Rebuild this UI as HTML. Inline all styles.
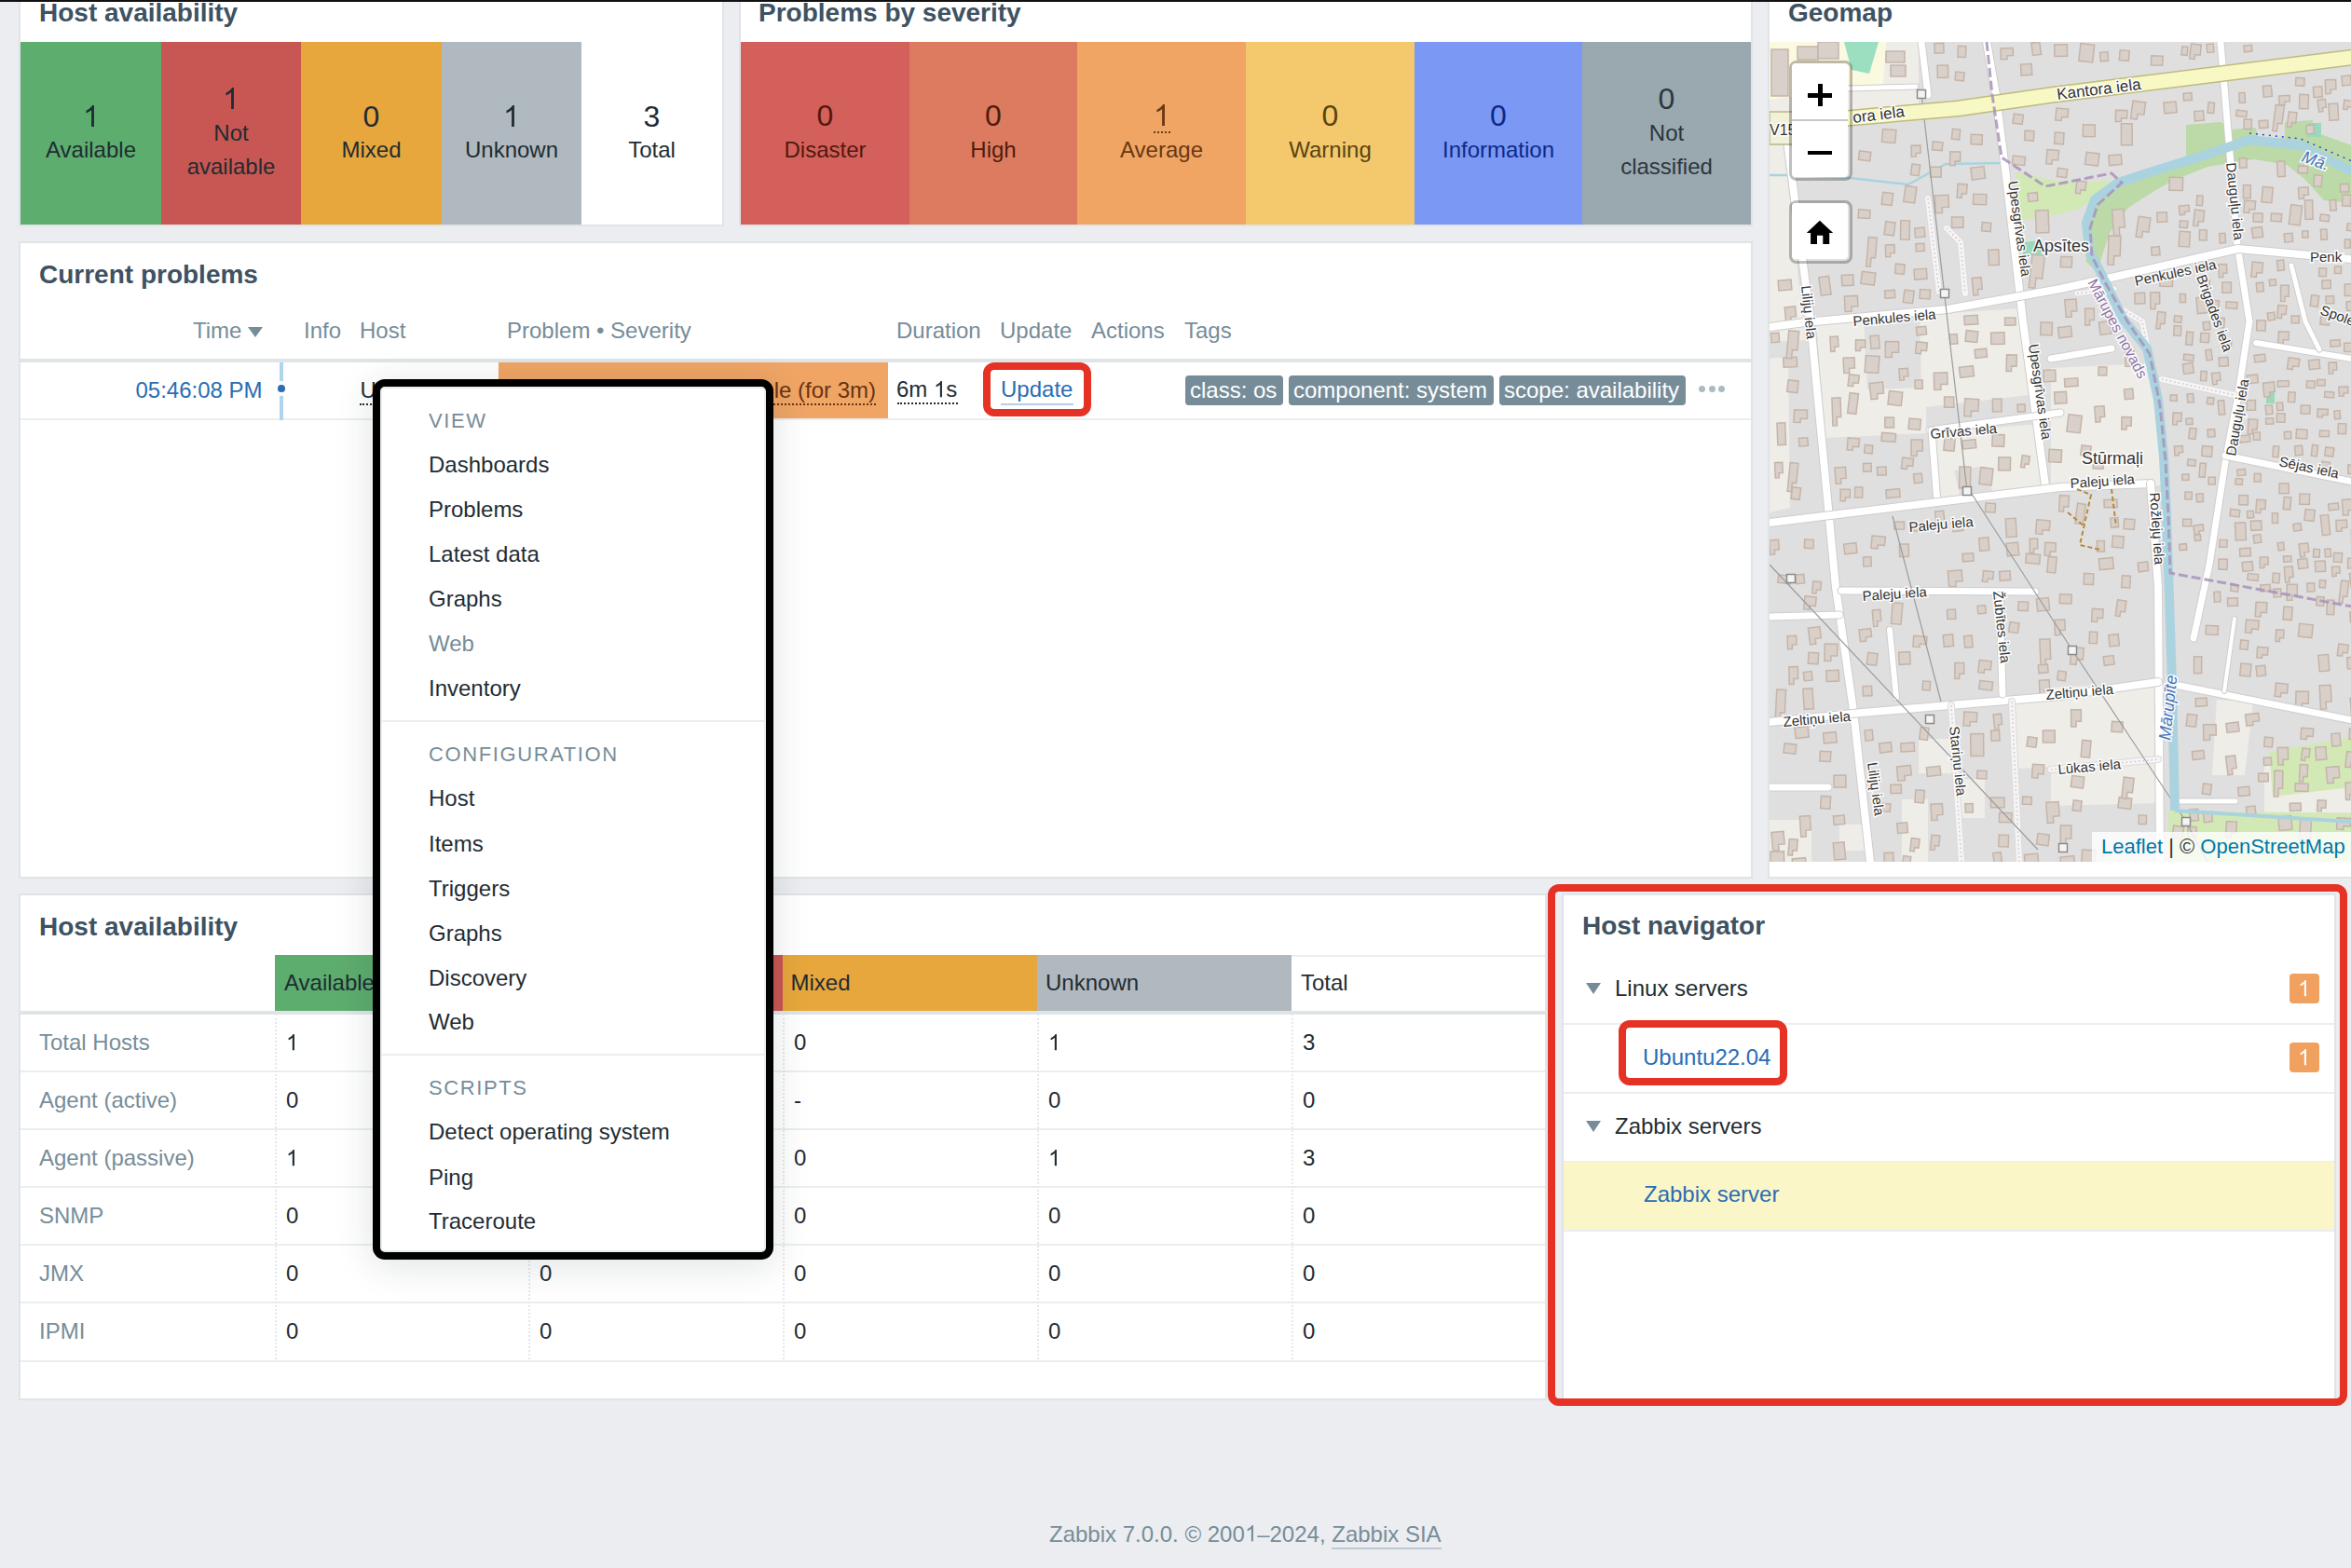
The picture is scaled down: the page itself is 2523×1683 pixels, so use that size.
<!DOCTYPE html>
<html><head><meta charset="utf-8">
<style>
html,body{margin:0;padding:0;}
body{width:2523px;height:1683px;overflow:hidden;background:#ebedf0;position:relative;font-family:"Liberation Sans",sans-serif;color:#1f2c33;}
.a{position:absolute;}
.t{position:absolute;white-space:pre;line-height:1;font-size:24px;}
.w{position:absolute;background:#fff;border:2px solid #dfe4e7;box-sizing:border-box;}
.ttl{position:absolute;white-space:pre;line-height:1;font-size:28px;font-weight:bold;color:#3e5262;}
.tile{position:absolute;top:45px;height:196px;}
.tile .n{position:absolute;left:0;right:0;text-align:center;font-size:32px;line-height:1;white-space:pre;}
.tile .l{position:absolute;left:0;right:0;text-align:center;font-size:24px;line-height:1;white-space:pre;}
.hd{color:#768d99;}
.lnk{color:#2a6db4;}
.mi{position:absolute;left:460px;font-size:24px;line-height:1;white-space:pre;color:#1f2c33;}
.mh{position:absolute;left:460px;font-size:22px;line-height:1;white-space:pre;color:#768d99;letter-spacing:1.6px;}
.msep{position:absolute;left:410px;width:412px;height:2px;background:#ebeef0;}
.tag{position:absolute;top:403px;height:32px;background:#768d99;color:#fff;border-radius:4px;font-size:24px;line-height:32px;white-space:pre;padding:0 5px;box-sizing:border-box;}
.red{position:absolute;border:8px solid #e53224;border-radius:12px;box-sizing:border-box;}
.cell{position:absolute;font-size:24px;line-height:1;white-space:pre;}
.hline{position:absolute;height:2px;background:#ebeef0;}
.vdot{position:absolute;width:0;border-left:2px dotted #e4e8eb;}
.badge{position:absolute;left:2457px;width:32px;height:32px;background:#f0a05f;border-radius:4px;color:#fff;font-size:24px;line-height:32px;text-align:center;}
.tri{position:absolute;width:0;height:0;border-left:8px solid transparent;border-right:8px solid transparent;border-top:12px solid #768d99;}
.one{display:inline-block;width:0.5562em;height:0.71875em;vertical-align:baseline;fill:currentColor;overflow:visible;}
</style></head><body>

<!-- top black line -->
<div class="a" style="left:0;top:0;width:2523px;height:2px;background:#111;z-index:50"></div>

<!-- ===== Widget: Host availability (tiles) ===== -->
<div class="w" style="left:20px;top:-40px;width:757px;height:283px;"></div>
<div class="ttl" style="left:42px;top:0.3px;">Host availability</div>
<div class="tile" style="left:22px;width:151px;background:#5dad6e;">
  <div class="n" style="top:64.0px;"><svg class="one" viewBox="0 0 1139 1472"><path transform="matrix(1 0 0 -1 0 1472)" d="M763,0 L583,0 L583,1147 Q518,1085 412,1023 Q306,961 222,930 L222,1104 Q373,1175 486,1276 Q599,1377 646,1472 L763,1472 Z"/></svg></div><div class="l" style="top:104.3px;">Available</div></div>
<div class="tile" style="left:173px;width:150px;background:#c85652;">
  <div class="n" style="top:45.3px;"><svg class="one" viewBox="0 0 1139 1472"><path transform="matrix(1 0 0 -1 0 1472)" d="M763,0 L583,0 L583,1147 Q518,1085 412,1023 Q306,961 222,930 L222,1104 Q373,1175 486,1276 Q599,1377 646,1472 L763,1472 Z"/></svg></div><div class="l" style="top:86.1px;">Not</div><div class="l" style="top:121.8px;">available</div></div>
<div class="tile" style="left:323px;width:151px;background:#e7a73c;">
  <div class="n" style="top:64.0px;">0</div><div class="l" style="top:104.3px;">Mixed</div></div>
<div class="tile" style="left:474px;width:150px;background:#b0b9bf;">
  <div class="n" style="top:64.0px;"><svg class="one" viewBox="0 0 1139 1472"><path transform="matrix(1 0 0 -1 0 1472)" d="M763,0 L583,0 L583,1147 Q518,1085 412,1023 Q306,961 222,930 L222,1104 Q373,1175 486,1276 Q599,1377 646,1472 L763,1472 Z"/></svg></div><div class="l" style="top:104.3px;">Unknown</div></div>
<div class="tile" style="left:624px;width:151px;background:#fff;">
  <div class="n" style="top:64.0px;">3</div><div class="l" style="top:104.3px;">Total</div></div>

<!-- ===== Widget: Problems by severity ===== -->
<div class="w" style="left:793px;top:-40px;width:1088px;height:283px;"></div>
<div class="ttl" style="left:814px;top:0.3px;">Problems by severity</div>
<div class="tile" style="left:795px;width:181px;background:#d4605c;color:#52190d;">
  <div class="n" style="top:62.7px;">0</div><div class="l" style="top:103.9px;">Disaster</div></div>
<div class="tile" style="left:976px;width:180px;background:#dc7b5f;color:#4e1d0c;">
  <div class="n" style="top:62.7px;">0</div><div class="l" style="top:103.9px;">High</div></div>
<div class="tile" style="left:1156px;width:181px;background:#f0a565;color:#693811;">
  <div class="n" style="top:62.7px;"><svg class="one" viewBox="0 0 1139 1472"><path transform="matrix(1 0 0 -1 0 1472)" d="M763,0 L583,0 L583,1147 Q518,1085 412,1023 Q306,961 222,930 L222,1104 Q373,1175 486,1276 Q599,1377 646,1472 L763,1472 Z"/></svg></div><div class="a" style="left:82px;top:96px;width:18px;border-top:2px dotted #693811;"></div><div class="l" style="top:103.9px;">Average</div></div>
<div class="tile" style="left:1337px;width:181px;background:#f4c86c;color:#5a4412;">
  <div class="n" style="top:62.7px;">0</div><div class="l" style="top:103.9px;">Warning</div></div>
<div class="tile" style="left:1518px;width:180px;background:#7b98f4;color:#0d2a88;">
  <div class="n" style="top:62.7px;">0</div><div class="l" style="top:103.9px;">Information</div></div>
<div class="tile" style="left:1698px;width:181px;background:#9aa8b0;color:#2c363c;">
  <div class="n" style="top:44.8px;">0</div><div class="l" style="top:86.1px;">Not</div><div class="l" style="top:121.8px;">classified</div></div>

<!-- ===== Widget: Geomap ===== -->
<div class="w" style="left:1897px;top:-40px;width:700px;height:983px;"></div>
<div class="ttl" style="left:1919px;top:0px;">Geomap</div>
<div id="map" class="a" style="left:1899px;top:45px;width:624px;height:880px;overflow:hidden;background:#e0dfdf;">
<!--MAP-->
<svg width="625" height="880" viewBox="0 0 625 880" style="position:absolute;left:0;top:0;">
<rect width="625" height="880" fill="#e0dfdf"/>
<polygon points="50.0,300.0 272.0,286.0 287.0,378.0 168.0,392.0 168.0,420.0 60.0,425.0" fill="#efede8"/>
<polygon points="178.0,419.0 290.0,410.0 296.0,476.0 180.0,492.0" fill="#efede8"/>
<polygon points="302.0,350.0 413.0,345.0 420.0,476.0 302.0,480.0" fill="#efede8"/>
<polygon points="160.0,748.0 198.0,748.0 198.0,785.0 160.0,785.0" fill="#efede8"/>
<polygon points="142.0,813.0 170.0,813.0 170.0,880.0 142.0,880.0" fill="#efede8"/>
<polygon points="205.0,791.0 231.0,791.0 231.0,833.0 205.0,833.0" fill="#efede8"/>
<polygon points="263.0,708.0 312.0,706.0 312.0,778.0 263.0,780.0" fill="#efede8"/>
<polygon points="0.0,835.0 45.0,835.0 45.0,880.0 0.0,880.0" fill="#efede8"/>
<polygon points="75.0,840.0 105.0,840.0 105.0,868.0 75.0,868.0" fill="#efede8"/>
<polygon points="302.0,693.0 415.0,688.0 417.0,817.0 302.0,820.0" fill="#efede8"/>
<polygon points="480.0,706.0 519.0,708.0 510.0,787.0 475.0,787.0" fill="#efede8"/>
<polygon points="531.0,772.0 625.0,760.0 625.0,827.0 531.0,827.0" fill="#efede8"/>
<polygon points="0.0,0.0 160.0,0.0 160.0,70.0 0.0,80.0" fill="#efede8"/>
<polygon points="0.0,340.0 20.0,338.0 22.0,500.0 0.0,505.0" fill="#efede8"/>
<polygon points="0.0,95.0 14.0,95.0 38.0,320.0 0.0,322.0" fill="#efede8"/>
<polygon points="101.0,296.0 161.0,292.0 163.0,371.0 105.0,373.0" fill="#e0dfdf"/>
<polygon points="198.0,460.0 232.0,455.0 240.0,486.0 205.0,490.0" fill="#e0dfdf"/>
<polygon points="0.0,0.0 125.0,0.0 122.0,45.0 0.0,62.0" fill="#fbf9df"/>
<polygon points="80.0,0.0 117.0,0.0 107.0,34.0 88.0,30.0" fill="#9adfc0"/>
<rect x="2" y="8" width="18" height="50" fill="#d9d0c9" stroke="#c4b5aa" stroke-width="1.5"/>
<rect x="30" y="5" width="22" height="14" fill="#d9d0c9" stroke="#c4b5aa" stroke-width="1.5"/>
<rect x="52" y="0" width="22" height="18" fill="#d9d0c9" stroke="#c4b5aa" stroke-width="1.5"/>
<rect x="125" y="10" width="20" height="12" fill="#d9d0c9" stroke="#c4b5aa" stroke-width="1.5"/>
<rect x="130" y="25" width="16" height="12" fill="#d9d0c9" stroke="#c4b5aa" stroke-width="1.5"/>
<polygon points="447.0,89.0 484.0,86.0 494.0,94.0 522.0,92.0 524.0,103.0 553.0,103.0 553.0,86.0 583.0,84.0 583.0,96.0 625.0,111.0 625.0,173.0 595.0,170.0 573.0,146.0 555.0,132.0 520.0,126.0 470.0,134.0 430.0,150.0 405.0,165.0 385.0,178.0 365.0,205.0 356.0,232.0 352.0,248.0 340.0,236.0 336.0,200.0 345.0,172.0 368.0,152.0 415.0,138.0 447.0,128.0" fill="#bcd9a8"/>
<polygon points="264.0,140.0 312.0,150.0 380.0,150.0 330.0,180.0 300.0,188.0 268.0,191.0" fill="#d3e9b5"/>
<polygon points="536.0,762.0 625.0,746.0 625.0,800.0 540.0,810.0" fill="#d3e9b5"/>
<polygon points="428.0,825.0 625.0,828.0 625.0,880.0 428.0,880.0" fill="#d3e9b5"/>
<polygon points="272.0,215.0 292.0,213.0 292.0,228.0 272.0,230.0" fill="#9ad9bb"/>
<polygon points="577.0,87.0 592.0,87.0 592.0,102.0 577.0,102.0" fill="#9ad9bb"/>
<polygon points="533.0,370.0 542.0,370.0 542.0,388.0 533.0,388.0" fill="#9ad9bb"/>
<path d="M0,143 L25,143 L86,146 L149,153 L189,131 L249,130" fill="none" stroke="#aad3df" stroke-width="2.5"/>
<rect x="592.3" y="507.9" width="8.4" height="21.3" fill="#d9d0c9" stroke="#c4b5aa" stroke-width="1.5" transform="rotate(-6.2 596.5 518.5)"/>
<rect x="536.5" y="254.9" width="6.9" height="6.7" fill="#d9d0c9" stroke="#c4b5aa" stroke-width="1.5" transform="rotate(-7.5 540.0 258.2)"/>
<rect x="196.3" y="515.3" width="11.2" height="9.8" fill="#d9d0c9" stroke="#c4b5aa" stroke-width="1.5" transform="rotate(-7.4 201.9 520.2)"/>
<rect x="590.4" y="417.2" width="10.0" height="6.4" fill="#d9d0c9" stroke="#c4b5aa" stroke-width="1.5" transform="rotate(2.1 595.4 420.4)"/>
<rect x="36.8" y="676.0" width="8.9" height="9.5" fill="#d9d0c9" stroke="#c4b5aa" stroke-width="1.5" transform="rotate(-6.6 41.3 680.8)"/>
<rect x="157.7" y="305.7" width="10.5" height="8.7" fill="#d9d0c9" stroke="#c4b5aa" stroke-width="1.5" transform="rotate(-5.5 162.9 310.1)"/>
<rect x="91.6" y="478.0" width="8.2" height="11.2" fill="#d9d0c9" stroke="#c4b5aa" stroke-width="1.5" transform="rotate(1.3 95.7 483.6)"/>
<rect x="432.8" y="841.7" width="11.1" height="13.6" fill="#d9d0c9" stroke="#c4b5aa" stroke-width="1.5" transform="rotate(7.6 438.4 848.5)"/>
<rect x="227.9" y="194.0" width="9.6" height="9.2" fill="#d9d0c9" stroke="#c4b5aa" stroke-width="1.5" transform="rotate(4.8 232.7 198.6)"/>
<path d="M612.7,578.4 h8.1 v16.7 h-4.1 v7.5 h-4.1 z" fill="#d9d0c9" stroke="#c4b5aa" stroke-width="1.5" transform="rotate(6.6 616.7 586.8)"/>
<path d="M286.4,513.3 h14.3 v10.5 h-7.2 v4.7 h-7.2 z" fill="#d9d0c9" stroke="#c4b5aa" stroke-width="1.5" transform="rotate(4.4 293.5 518.6)"/>
<rect x="203.7" y="456.1" width="11.9" height="22.9" fill="#d9d0c9" stroke="#c4b5aa" stroke-width="1.5" transform="rotate(1.4 209.7 467.6)"/>
<rect x="155.3" y="243.7" width="13.4" height="11.0" fill="#d9d0c9" stroke="#c4b5aa" stroke-width="1.5" transform="rotate(-3.9 162.0 249.2)"/>
<rect x="570.3" y="390.1" width="9.7" height="9.0" fill="#d9d0c9" stroke="#c4b5aa" stroke-width="1.5" transform="rotate(1.5 575.1 394.6)"/>
<path d="M433.0,398.1 h9.2 v8.9 h-4.6 v4.0 h-4.6 z" fill="#d9d0c9" stroke="#c4b5aa" stroke-width="1.5" transform="rotate(2.6 437.6 402.5)"/>
<path d="M96.5,630.2 h12.6 v8.9 h-6.3 v4.0 h-6.3 z" fill="#d9d0c9" stroke="#c4b5aa" stroke-width="1.5" transform="rotate(-6.5 102.8 634.6)"/>
<rect x="137.2" y="838.2" width="10.8" height="10.9" fill="#d9d0c9" stroke="#c4b5aa" stroke-width="1.5" transform="rotate(-4.9 142.6 843.7)"/>
<rect x="207.2" y="549.1" width="11.6" height="8.4" fill="#d9d0c9" stroke="#c4b5aa" stroke-width="1.5" transform="rotate(-4.2 213.0 553.2)"/>
<rect x="574.5" y="502.1" width="10.2" height="11.8" fill="#d9d0c9" stroke="#c4b5aa" stroke-width="1.5" transform="rotate(6.3 579.6 508.0)"/>
<rect x="501.0" y="73.7" width="11.1" height="6.4" fill="#d9d0c9" stroke="#c4b5aa" stroke-width="1.5" transform="rotate(6.7 506.6 76.9)"/>
<rect x="458.2" y="484.9" width="7.1" height="8.8" fill="#d9d0c9" stroke="#c4b5aa" stroke-width="1.5" transform="rotate(-3.2 461.7 489.3)"/>
<rect x="245.7" y="445.9" width="12.8" height="13.9" fill="#d9d0c9" stroke="#c4b5aa" stroke-width="1.5" transform="rotate(1.2 252.1 452.8)"/>
<rect x="193.5" y="313.8" width="8.0" height="10.3" fill="#d9d0c9" stroke="#c4b5aa" stroke-width="1.5" transform="rotate(-5.2 197.5 318.9)"/>
<rect x="27.4" y="735.1" width="14.2" height="11.8" fill="#d9d0c9" stroke="#c4b5aa" stroke-width="1.5" transform="rotate(-6.7 34.5 740.9)"/>
<rect x="516.5" y="514.0" width="11.4" height="10.1" fill="#d9d0c9" stroke="#c4b5aa" stroke-width="1.5" transform="rotate(-3.2 522.2 519.0)"/>
<path d="M522.4,491.5 h9.8 v9.8 h-4.9 v4.4 h-4.9 z" fill="#d9d0c9" stroke="#c4b5aa" stroke-width="1.5" transform="rotate(3.3 527.3 496.4)"/>
<rect x="305.8" y="2.9" width="13.6" height="12.5" fill="#d9d0c9" stroke="#c4b5aa" stroke-width="1.5" transform="rotate(-1.0 312.6 9.2)"/>
<path d="M455.8,180.6 h10.4 v11.9 h-5.2 v5.3 h-5.2 z" fill="#d9d0c9" stroke="#c4b5aa" stroke-width="1.5" transform="rotate(6.2 461.1 186.5)"/>
<rect x="239.1" y="421.5" width="12.8" height="12.6" fill="#d9d0c9" stroke="#c4b5aa" stroke-width="1.5" transform="rotate(2.6 245.5 427.8)"/>
<rect x="354.9" y="11.0" width="8.4" height="9.6" fill="#d9d0c9" stroke="#c4b5aa" stroke-width="1.5" transform="rotate(-4.2 359.1 15.8)"/>
<rect x="558.5" y="175.3" width="11.9" height="20.9" fill="#d9d0c9" stroke="#c4b5aa" stroke-width="1.5" transform="rotate(7.0 564.5 185.8)"/>
<rect x="591.0" y="185.4" width="9.5" height="6.9" fill="#d9d0c9" stroke="#c4b5aa" stroke-width="1.5" transform="rotate(7.6 595.7 188.8)"/>
<rect x="439.6" y="203.6" width="11.4" height="16.1" fill="#d9d0c9" stroke="#c4b5aa" stroke-width="1.5" transform="rotate(3.2 445.3 211.6)"/>
<path d="M597.6,778.2 h13.7 v11.8 h-6.8 v5.3 h-6.8 z" fill="#d9d0c9" stroke="#c4b5aa" stroke-width="1.5" transform="rotate(-4.5 604.4 784.0)"/>
<rect x="343.3" y="633.2" width="8.3" height="12.4" fill="#d9d0c9" stroke="#c4b5aa" stroke-width="1.5" transform="rotate(2.6 347.4 639.4)"/>
<rect x="129.9" y="797.2" width="11.5" height="9.3" fill="#d9d0c9" stroke="#c4b5aa" stroke-width="1.5" transform="rotate(-0.7 135.7 801.9)"/>
<path d="M173.4,851.6 h8.9 v11.0 h-4.4 v5.0 h-4.4 z" fill="#d9d0c9" stroke="#c4b5aa" stroke-width="1.5" transform="rotate(5.5 177.9 857.1)"/>
<rect x="135.0" y="238.5" width="9.7" height="10.4" fill="#d9d0c9" stroke="#c4b5aa" stroke-width="1.5" transform="rotate(5.5 139.8 243.7)"/>
<rect x="530.4" y="768.1" width="8.2" height="8.2" fill="#d9d0c9" stroke="#c4b5aa" stroke-width="1.5" transform="rotate(-2.1 534.5 772.2)"/>
<rect x="375.7" y="9.2" width="10.1" height="10.8" fill="#d9d0c9" stroke="#c4b5aa" stroke-width="1.5" transform="rotate(4.6 380.7 14.6)"/>
<rect x="552.4" y="418.3" width="7.4" height="7.5" fill="#d9d0c9" stroke="#c4b5aa" stroke-width="1.5" transform="rotate(-1.6 556.1 422.0)"/>
<rect x="440.4" y="270.5" width="6.1" height="9.0" fill="#d9d0c9" stroke="#c4b5aa" stroke-width="1.5" transform="rotate(-0.6 443.5 275.0)"/>
<rect x="574.7" y="169.9" width="8.2" height="20.5" fill="#d9d0c9" stroke="#c4b5aa" stroke-width="1.5" transform="rotate(-1.7 578.8 180.1)"/>
<rect x="396.2" y="830.1" width="8.2" height="9.4" fill="#d9d0c9" stroke="#c4b5aa" stroke-width="1.5" transform="rotate(0.3 400.3 834.8)"/>
<rect x="483.0" y="534.4" width="8.0" height="7.9" fill="#d9d0c9" stroke="#c4b5aa" stroke-width="1.5" transform="rotate(3.3 487.0 538.3)"/>
<path d="M124.5,217.7 h9.7 v8.9 h-4.9 v4.0 h-4.9 z" fill="#d9d0c9" stroke="#c4b5aa" stroke-width="1.5" transform="rotate(-2.2 129.4 222.2)"/>
<rect x="204.0" y="348.5" width="14.9" height="11.0" fill="#d9d0c9" stroke="#c4b5aa" stroke-width="1.5" transform="rotate(-6.8 211.4 354.1)"/>
<path d="M608.1,513.2 h11.6 v8.2 h-5.8 v3.7 h-5.8 z" fill="#d9d0c9" stroke="#c4b5aa" stroke-width="1.5" transform="rotate(-2.2 613.9 517.3)"/>
<path d="M280.7,228.8 h13.4 v24.6 h-6.7 v11.1 h-6.7 z" fill="#d9d0c9" stroke="#c4b5aa" stroke-width="1.5" transform="rotate(6.4 287.4 241.1)"/>
<rect x="512.7" y="357.5" width="11.3" height="8.8" fill="#d9d0c9" stroke="#c4b5aa" stroke-width="1.5" transform="rotate(-5.9 518.4 361.9)"/>
<rect x="325.7" y="814.4" width="8.8" height="10.9" fill="#d9d0c9" stroke="#c4b5aa" stroke-width="1.5" transform="rotate(6.6 330.1 819.9)"/>
<rect x="578.9" y="341.3" width="11.4" height="9.7" fill="#d9d0c9" stroke="#c4b5aa" stroke-width="1.5" transform="rotate(-6.2 584.6 346.2)"/>
<rect x="100.2" y="691.5" width="9.6" height="10.4" fill="#d9d0c9" stroke="#c4b5aa" stroke-width="1.5" transform="rotate(-2.4 104.9 696.7)"/>
<path d="M154.4,637.9 h14.3 v8.2 h-7.1 v3.7 h-7.1 z" fill="#d9d0c9" stroke="#c4b5aa" stroke-width="1.5" transform="rotate(4.8 161.6 642.0)"/>
<rect x="391.9" y="269.5" width="10.9" height="11.5" fill="#d9d0c9" stroke="#c4b5aa" stroke-width="1.5" transform="rotate(-2.3 397.4 275.2)"/>
<path d="M509.4,170.5 h11.9 v9.0 h-5.9 v4.0 h-5.9 z" fill="#d9d0c9" stroke="#c4b5aa" stroke-width="1.5" transform="rotate(4.9 515.3 174.9)"/>
<rect x="199.4" y="32.4" width="9.3" height="9.0" fill="#d9d0c9" stroke="#c4b5aa" stroke-width="1.5" transform="rotate(5.7 204.1 36.9)"/>
<rect x="620.6" y="554.2" width="8.4" height="10.8" fill="#d9d0c9" stroke="#c4b5aa" stroke-width="1.5" transform="rotate(0.8 624.8 559.6)"/>
<rect x="1.6" y="312.4" width="8.7" height="10.1" fill="#d9d0c9" stroke="#c4b5aa" stroke-width="1.5" transform="rotate(-4.1 6.0 317.4)"/>
<path d="M368.2,179.7 h12.4 v19.5 h-6.2 v8.8 h-6.2 z" fill="#d9d0c9" stroke="#c4b5aa" stroke-width="1.5" transform="rotate(-4.4 374.4 189.4)"/>
<rect x="152.2" y="131.4" width="8.7" height="11.8" fill="#d9d0c9" stroke="#c4b5aa" stroke-width="1.5" transform="rotate(7.9 156.6 137.3)"/>
<rect x="564.7" y="38.7" width="9.2" height="8.4" fill="#d9d0c9" stroke="#c4b5aa" stroke-width="1.5" transform="rotate(3.6 569.3 42.9)"/>
<rect x="508.4" y="153.7" width="7.9" height="14.0" fill="#d9d0c9" stroke="#c4b5aa" stroke-width="1.5" transform="rotate(-0.0 512.3 160.7)"/>
<rect x="567.2" y="555.0" width="10.2" height="10.0" fill="#d9d0c9" stroke="#c4b5aa" stroke-width="1.5" transform="rotate(-6.7 572.3 560.0)"/>
<rect x="293.4" y="738.9" width="12.9" height="13.1" fill="#d9d0c9" stroke="#c4b5aa" stroke-width="1.5" transform="rotate(-0.2 299.9 745.5)"/>
<path d="M511.0,721.2 h14.2 v8.4 h-7.1 v3.8 h-7.1 z" fill="#d9d0c9" stroke="#c4b5aa" stroke-width="1.5" transform="rotate(-6.6 518.1 725.4)"/>
<rect x="507.5" y="558.1" width="11.0" height="9.8" fill="#d9d0c9" stroke="#c4b5aa" stroke-width="1.5" transform="rotate(-5.3 513.0 563.0)"/>
<rect x="19.4" y="363.4" width="11.1" height="12.6" fill="#d9d0c9" stroke="#c4b5aa" stroke-width="1.5" transform="rotate(6.0 24.9 369.7)"/>
<rect x="552.5" y="205.5" width="8.8" height="9.2" fill="#d9d0c9" stroke="#c4b5aa" stroke-width="1.5" transform="rotate(-4.1 556.9 210.1)"/>
<rect x="526.9" y="582.6" width="10.5" height="7.0" fill="#d9d0c9" stroke="#c4b5aa" stroke-width="1.5" transform="rotate(-3.9 532.2 586.2)"/>
<rect x="358.7" y="659.2" width="10.9" height="9.4" fill="#d9d0c9" stroke="#c4b5aa" stroke-width="1.5" transform="rotate(-7.6 364.2 663.9)"/>
<rect x="23.8" y="478.2" width="9.1" height="12.7" fill="#d9d0c9" stroke="#c4b5aa" stroke-width="1.5" transform="rotate(7.4 28.4 484.5)"/>
<rect x="131.3" y="602.2" width="10.7" height="22.6" fill="#d9d0c9" stroke="#c4b5aa" stroke-width="1.5" transform="rotate(4.6 136.7 613.6)"/>
<rect x="235.1" y="223.1" width="11.0" height="16.4" fill="#d9d0c9" stroke="#c4b5aa" stroke-width="1.5" transform="rotate(-2.7 240.6 231.3)"/>
<rect x="410.0" y="220.0" width="8.7" height="8.9" fill="#d9d0c9" stroke="#c4b5aa" stroke-width="1.5" transform="rotate(-5.1 414.3 224.5)"/>
<rect x="216.5" y="134.4" width="14.3" height="12.8" fill="#d9d0c9" stroke="#c4b5aa" stroke-width="1.5" transform="rotate(-7.8 223.7 140.7)"/>
<rect x="551.7" y="488.5" width="7.6" height="13.3" fill="#d9d0c9" stroke="#c4b5aa" stroke-width="1.5" transform="rotate(4.8 555.5 495.1)"/>
<rect x="600.4" y="66.3" width="9.8" height="17.7" fill="#d9d0c9" stroke="#c4b5aa" stroke-width="1.5" transform="rotate(-2.8 605.3 75.2)"/>
<path d="M568.6,538.3 h9.7 v9.8 h-4.9 v4.4 h-4.9 z" fill="#d9d0c9" stroke="#c4b5aa" stroke-width="1.5" transform="rotate(-7.3 573.5 543.2)"/>
<path d="M372.7,599.3 h9.5 v12.0 h-4.7 v5.4 h-4.7 z" fill="#d9d0c9" stroke="#c4b5aa" stroke-width="1.5" transform="rotate(8.0 377.4 605.3)"/>
<rect x="161.3" y="265.8" width="11.0" height="9.9" fill="#d9d0c9" stroke="#c4b5aa" stroke-width="1.5" transform="rotate(3.8 166.7 270.8)"/>
<rect x="583.7" y="48.1" width="9.4" height="11.2" fill="#d9d0c9" stroke="#c4b5aa" stroke-width="1.5" transform="rotate(-3.6 588.4 53.7)"/>
<rect x="458.5" y="164.9" width="6.3" height="10.6" fill="#d9d0c9" stroke="#c4b5aa" stroke-width="1.5" transform="rotate(3.5 461.6 170.2)"/>
<rect x="456.1" y="74.2" width="9.8" height="10.3" fill="#d9d0c9" stroke="#c4b5aa" stroke-width="1.5" transform="rotate(-4.9 461.0 79.3)"/>
<rect x="9.2" y="572.6" width="13.7" height="8.5" fill="#d9d0c9" stroke="#c4b5aa" stroke-width="1.5" transform="rotate(7.3 16.1 576.9)"/>
<path d="M590.6,690.5 h12.0 v17.6 h-6.0 v7.9 h-6.0 z" fill="#d9d0c9" stroke="#c4b5aa" stroke-width="1.5" transform="rotate(-3.1 596.6 699.2)"/>
<rect x="519.6" y="529.0" width="7.9" height="8.6" fill="#d9d0c9" stroke="#c4b5aa" stroke-width="1.5" transform="rotate(-7.6 523.5 533.3)"/>
<rect x="177.1" y="1.5" width="9.8" height="10.5" fill="#d9d0c9" stroke="#c4b5aa" stroke-width="1.5" transform="rotate(-1.5 182.0 6.8)"/>
<path d="M619.0,762.2 h11.4 v11.4 h-5.7 v5.1 h-5.7 z" fill="#d9d0c9" stroke="#c4b5aa" stroke-width="1.5" transform="rotate(6.5 624.7 767.9)"/>
<rect x="568.7" y="56.5" width="9.6" height="15.1" fill="#d9d0c9" stroke="#c4b5aa" stroke-width="1.5" transform="rotate(1.8 573.5 64.0)"/>
<rect x="619.8" y="195.1" width="6.2" height="7.5" fill="#d9d0c9" stroke="#c4b5aa" stroke-width="1.5" transform="rotate(6.4 622.9 198.9)"/>
<rect x="564.2" y="796.0" width="13.9" height="8.3" fill="#d9d0c9" stroke="#c4b5aa" stroke-width="1.5" transform="rotate(2.1 571.2 800.2)"/>
<rect x="587.1" y="595.7" width="7.8" height="9.5" fill="#d9d0c9" stroke="#c4b5aa" stroke-width="1.5" transform="rotate(4.9 591.0 600.4)"/>
<path d="M105.4,209.8 h9.0 v21.7 h-4.5 v9.8 h-4.5 z" fill="#d9d0c9" stroke="#c4b5aa" stroke-width="1.5" transform="rotate(4.7 109.9 220.7)"/>
<path d="M541.7,782.1 h9.0 v19.2 h-4.5 v8.7 h-4.5 z" fill="#d9d0c9" stroke="#c4b5aa" stroke-width="1.5" transform="rotate(0.8 546.2 791.7)"/>
<path d="M526.4,553.0 h8.7 v8.0 h-4.4 v3.6 h-4.4 z" fill="#d9d0c9" stroke="#c4b5aa" stroke-width="1.5" transform="rotate(-0.5 530.8 557.0)"/>
<rect x="298.5" y="552.8" width="9.0" height="16.8" fill="#d9d0c9" stroke="#c4b5aa" stroke-width="1.5" transform="rotate(5.3 303.0 561.2)"/>
<rect x="520.2" y="463.4" width="7.1" height="8.6" fill="#d9d0c9" stroke="#c4b5aa" stroke-width="1.5" transform="rotate(1.6 523.7 467.7)"/>
<rect x="540.3" y="433.9" width="6.1" height="11.5" fill="#d9d0c9" stroke="#c4b5aa" stroke-width="1.5" transform="rotate(4.2 543.4 439.6)"/>
<rect x="545.0" y="234.3" width="7.1" height="11.0" fill="#d9d0c9" stroke="#c4b5aa" stroke-width="1.5" transform="rotate(-6.0 548.6 239.8)"/>
<rect x="444.5" y="335.6" width="10.5" height="6.4" fill="#d9d0c9" stroke="#c4b5aa" stroke-width="1.5" transform="rotate(6.2 449.7 338.8)"/>
<rect x="596.3" y="435.4" width="9.1" height="9.2" fill="#d9d0c9" stroke="#c4b5aa" stroke-width="1.5" transform="rotate(7.3 600.8 440.0)"/>
<path d="M543.5,631.0 h8.3 v8.7 h-4.2 v3.9 h-4.2 z" fill="#d9d0c9" stroke="#c4b5aa" stroke-width="1.5" transform="rotate(2.0 547.6 635.4)"/>
<rect x="174.8" y="107.4" width="10.8" height="8.8" fill="#d9d0c9" stroke="#c4b5aa" stroke-width="1.5" transform="rotate(5.1 180.2 111.8)"/>
<path d="M209.4,383.3 h14.9 v12.8 h-7.4 v5.8 h-7.4 z" fill="#d9d0c9" stroke="#c4b5aa" stroke-width="1.5" transform="rotate(3.5 216.9 389.7)"/>
<rect x="529.8" y="47.1" width="9.1" height="11.7" fill="#d9d0c9" stroke="#c4b5aa" stroke-width="1.5" transform="rotate(-5.4 534.3 53.0)"/>
<path d="M270.7,444.2 h8.1 v8.8 h-4.1 v4.0 h-4.1 z" fill="#d9d0c9" stroke="#c4b5aa" stroke-width="1.5" transform="rotate(7.7 274.7 448.6)"/>
<rect x="585.6" y="557.2" width="10.9" height="11.3" fill="#d9d0c9" stroke="#c4b5aa" stroke-width="1.5" transform="rotate(-2.9 591.0 562.9)"/>
<rect x="617.2" y="260.0" width="10.6" height="12.5" fill="#d9d0c9" stroke="#c4b5aa" stroke-width="1.5" transform="rotate(0.2 622.5 266.3)"/>
<rect x="544.5" y="387.2" width="6.4" height="8.3" fill="#d9d0c9" stroke="#c4b5aa" stroke-width="1.5" transform="rotate(-3.5 547.7 391.4)"/>
<rect x="210.6" y="310.2" width="12.7" height="11.7" fill="#d9d0c9" stroke="#c4b5aa" stroke-width="1.5" transform="rotate(5.9 217.0 316.0)"/>
<path d="M323.6,650.1 h13.2 v12.6 h-6.6 v5.7 h-6.6 z" fill="#d9d0c9" stroke="#c4b5aa" stroke-width="1.5" transform="rotate(5.2 330.2 656.4)"/>
<rect x="277.5" y="162.1" width="10.1" height="8.9" fill="#d9d0c9" stroke="#c4b5aa" stroke-width="1.5" transform="rotate(-6.2 282.6 166.5)"/>
<rect x="55.0" y="809.7" width="10.3" height="13.1" fill="#d9d0c9" stroke="#c4b5aa" stroke-width="1.5" transform="rotate(3.9 60.1 816.3)"/>
<rect x="127.7" y="375.3" width="14.4" height="14.5" fill="#d9d0c9" stroke="#c4b5aa" stroke-width="1.5" transform="rotate(6.3 134.9 382.5)"/>
<rect x="275.1" y="549.7" width="15.0" height="10.1" fill="#d9d0c9" stroke="#c4b5aa" stroke-width="1.5" transform="rotate(4.7 282.6 554.7)"/>
<rect x="69.1" y="787.2" width="12.8" height="12.9" fill="#d9d0c9" stroke="#c4b5aa" stroke-width="1.5" transform="rotate(-1.0 75.5 793.6)"/>
<path d="M311.2,486.9 h9.9 v11.9 h-4.9 v5.3 h-4.9 z" fill="#d9d0c9" stroke="#c4b5aa" stroke-width="1.5" transform="rotate(3.6 316.1 492.8)"/>
<rect x="504.1" y="54.7" width="6.1" height="10.6" fill="#d9d0c9" stroke="#c4b5aa" stroke-width="1.5" transform="rotate(-2.0 507.2 60.0)"/>
<rect x="447.2" y="311.4" width="7.0" height="13.7" fill="#d9d0c9" stroke="#c4b5aa" stroke-width="1.5" transform="rotate(5.3 450.7 318.2)"/>
<rect x="108.4" y="315.4" width="9.3" height="13.8" fill="#d9d0c9" stroke="#c4b5aa" stroke-width="1.5" transform="rotate(-4.6 113.1 322.3)"/>
<rect x="562.3" y="517.1" width="8.2" height="7.5" fill="#d9d0c9" stroke="#c4b5aa" stroke-width="1.5" transform="rotate(-7.8 566.4 520.8)"/>
<rect x="482.3" y="338.6" width="9.9" height="9.4" fill="#d9d0c9" stroke="#c4b5aa" stroke-width="1.5" transform="rotate(-2.7 487.3 343.3)"/>
<path d="M176.5,355.0 h14.4 v12.6 h-7.2 v5.7 h-7.2 z" fill="#d9d0c9" stroke="#c4b5aa" stroke-width="1.5" transform="rotate(-1.3 183.7 361.3)"/>
<rect x="123.8" y="266.7" width="10.7" height="8.2" fill="#d9d0c9" stroke="#c4b5aa" stroke-width="1.5" transform="rotate(-3.4 129.1 270.8)"/>
<rect x="620.1" y="660.4" width="8.6" height="12.3" fill="#d9d0c9" stroke="#c4b5aa" stroke-width="1.5" transform="rotate(-3.0 624.4 666.5)"/>
<rect x="157.1" y="216.5" width="9.0" height="8.2" fill="#d9d0c9" stroke="#c4b5aa" stroke-width="1.5" transform="rotate(-3.9 161.6 220.6)"/>
<rect x="490.4" y="730.7" width="13.2" height="10.0" fill="#d9d0c9" stroke="#c4b5aa" stroke-width="1.5" transform="rotate(-7.0 497.0 735.7)"/>
<path d="M451.8,2.5 h11.0 v11.1 h-5.5 v5.0 h-5.5 z" fill="#d9d0c9" stroke="#c4b5aa" stroke-width="1.5" transform="rotate(6.7 457.4 8.0)"/>
<path d="M37.5,595.3 h12.3 v9.8 h-6.1 v4.4 h-6.1 z" fill="#d9d0c9" stroke="#c4b5aa" stroke-width="1.5" transform="rotate(5.4 43.6 600.2)"/>
<rect x="353.0" y="348.8" width="8.8" height="9.1" fill="#d9d0c9" stroke="#c4b5aa" stroke-width="1.5" transform="rotate(1.7 357.4 353.3)"/>
<rect x="600.0" y="495.5" width="10.6" height="6.8" fill="#d9d0c9" stroke="#c4b5aa" stroke-width="1.5" transform="rotate(-7.2 605.3 498.9)"/>
<rect x="105.0" y="656.0" width="10.4" height="12.6" fill="#d9d0c9" stroke="#c4b5aa" stroke-width="1.5" transform="rotate(6.5 110.2 662.3)"/>
<rect x="377.4" y="87.7" width="11.8" height="23.1" fill="#d9d0c9" stroke="#c4b5aa" stroke-width="1.5" transform="rotate(-0.4 383.3 99.2)"/>
<rect x="547.1" y="473.8" width="10.1" height="10.8" fill="#d9d0c9" stroke="#c4b5aa" stroke-width="1.5" transform="rotate(-1.2 552.2 479.2)"/>
<rect x="545.6" y="537.5" width="6.5" height="8.0" fill="#d9d0c9" stroke="#c4b5aa" stroke-width="1.5" transform="rotate(-7.6 548.9 541.5)"/>
<rect x="312.5" y="230.6" width="12.0" height="11.2" fill="#d9d0c9" stroke="#c4b5aa" stroke-width="1.5" transform="rotate(1.9 318.5 236.2)"/>
<rect x="395.7" y="558.5" width="10.5" height="9.7" fill="#d9d0c9" stroke="#c4b5aa" stroke-width="1.5" transform="rotate(-7.2 401.0 563.3)"/>
<rect x="544.4" y="398.8" width="8.7" height="9.4" fill="#d9d0c9" stroke="#c4b5aa" stroke-width="1.5" transform="rotate(1.4 548.7 403.5)"/>
<rect x="440.2" y="192.1" width="8.4" height="7.2" fill="#d9d0c9" stroke="#c4b5aa" stroke-width="1.5" transform="rotate(4.2 444.4 195.7)"/>
<rect x="540.0" y="570.3" width="7.2" height="10.4" fill="#d9d0c9" stroke="#c4b5aa" stroke-width="1.5" transform="rotate(4.5 543.6 575.5)"/>
<rect x="483.9" y="319.0" width="11.9" height="7.4" fill="#d9d0c9" stroke="#c4b5aa" stroke-width="1.5" transform="rotate(5.5 489.8 322.7)"/>
<rect x="207.2" y="427.3" width="14.2" height="9.0" fill="#d9d0c9" stroke="#c4b5aa" stroke-width="1.5" transform="rotate(-5.9 214.3 431.8)"/>
<rect x="225.2" y="686.2" width="14.0" height="9.1" fill="#d9d0c9" stroke="#c4b5aa" stroke-width="1.5" transform="rotate(6.7 232.2 690.8)"/>
<path d="M619.2,278.5 h11.3 v6.7 h-5.6 v3.0 h-5.6 z" fill="#d9d0c9" stroke="#c4b5aa" stroke-width="1.5" transform="rotate(-2.1 624.9 281.9)"/>
<rect x="84.9" y="377.1" width="9.3" height="21.8" fill="#d9d0c9" stroke="#c4b5aa" stroke-width="1.5" transform="rotate(6.8 89.5 388.0)"/>
<rect x="381.8" y="331.7" width="9.7" height="16.5" fill="#d9d0c9" stroke="#c4b5aa" stroke-width="1.5" transform="rotate(-1.4 386.7 340.0)"/>
<rect x="139.5" y="539.0" width="9.9" height="13.5" fill="#d9d0c9" stroke="#c4b5aa" stroke-width="1.5" transform="rotate(-1.2 144.5 545.7)"/>
<path d="M513.7,405.1 h9.8 v11.0 h-4.9 v4.9 h-4.9 z" fill="#d9d0c9" stroke="#c4b5aa" stroke-width="1.5" transform="rotate(3.1 518.6 410.5)"/>
<rect x="502.0" y="458.8" width="8.7" height="6.5" fill="#d9d0c9" stroke="#c4b5aa" stroke-width="1.5" transform="rotate(-6.6 506.4 462.1)"/>
<rect x="623.1" y="611.6" width="11.1" height="10.9" fill="#d9d0c9" stroke="#c4b5aa" stroke-width="1.5" transform="rotate(-2.6 628.7 617.0)"/>
<path d="M416.0,289.9 h8.5 v12.5 h-4.2 v5.6 h-4.2 z" fill="#d9d0c9" stroke="#c4b5aa" stroke-width="1.5" transform="rotate(6.4 420.2 296.2)"/>
<rect x="462.8" y="353.5" width="6.2" height="10.1" fill="#d9d0c9" stroke="#c4b5aa" stroke-width="1.5" transform="rotate(2.9 465.9 358.5)"/>
<rect x="545.0" y="128.1" width="8.0" height="16.4" fill="#d9d0c9" stroke="#c4b5aa" stroke-width="1.5" transform="rotate(-3.5 549.0 136.3)"/>
<rect x="347.3" y="449.7" width="10.9" height="8.3" fill="#d9d0c9" stroke="#c4b5aa" stroke-width="1.5" transform="rotate(1.7 352.8 453.8)"/>
<rect x="311.4" y="593.0" width="12.7" height="9.8" fill="#d9d0c9" stroke="#c4b5aa" stroke-width="1.5" transform="rotate(2.0 317.7 597.9)"/>
<path d="M490.2,836.8 h10.9 v12.0 h-5.5 v5.4 h-5.5 z" fill="#d9d0c9" stroke="#c4b5aa" stroke-width="1.5" transform="rotate(3.2 495.6 842.7)"/>
<rect x="522.6" y="258.4" width="7.4" height="9.5" fill="#d9d0c9" stroke="#c4b5aa" stroke-width="1.5" transform="rotate(-5.2 526.3 263.1)"/>
<path d="M290.3,640.9 h11.0 v21.7 h-5.5 v9.8 h-5.5 z" fill="#d9d0c9" stroke="#c4b5aa" stroke-width="1.5" transform="rotate(-2.5 295.8 651.7)"/>
<rect x="590.3" y="577.7" width="6.3" height="8.0" fill="#d9d0c9" stroke="#c4b5aa" stroke-width="1.5" transform="rotate(4.3 593.4 581.7)"/>
<path d="M21.1,451.8 h8.7 v21.4 h-4.3 v9.6 h-4.3 z" fill="#d9d0c9" stroke="#c4b5aa" stroke-width="1.5" transform="rotate(6.0 25.4 462.5)"/>
<rect x="220.5" y="329.7" width="12.6" height="9.0" fill="#d9d0c9" stroke="#c4b5aa" stroke-width="1.5" transform="rotate(-5.8 226.9 334.2)"/>
<rect x="494.4" y="502.0" width="10.1" height="7.4" fill="#d9d0c9" stroke="#c4b5aa" stroke-width="1.5" transform="rotate(7.3 499.5 505.6)"/>
<rect x="614.3" y="36.3" width="9.7" height="10.2" fill="#d9d0c9" stroke="#c4b5aa" stroke-width="1.5" transform="rotate(-6.0 619.2 41.4)"/>
<rect x="587.7" y="362.5" width="8.4" height="6.5" fill="#d9d0c9" stroke="#c4b5aa" stroke-width="1.5" transform="rotate(1.0 591.9 365.8)"/>
<rect x="123.9" y="193.3" width="10.3" height="13.9" fill="#d9d0c9" stroke="#c4b5aa" stroke-width="1.5" transform="rotate(7.3 129.0 200.2)"/>
<rect x="299.8" y="437.6" width="13.5" height="13.4" fill="#d9d0c9" stroke="#c4b5aa" stroke-width="1.5" transform="rotate(3.2 306.6 444.4)"/>
<path d="M465.6,732.6 h13.6 v11.5 h-6.8 v5.2 h-6.8 z" fill="#d9d0c9" stroke="#c4b5aa" stroke-width="1.5" transform="rotate(-1.4 472.4 738.3)"/>
<path d="M490.3,766.3 h10.1 v13.8 h-5.0 v6.2 h-5.0 z" fill="#d9d0c9" stroke="#c4b5aa" stroke-width="1.5" transform="rotate(-6.9 495.3 773.2)"/>
<rect x="123.8" y="403.0" width="9.7" height="11.0" fill="#d9d0c9" stroke="#c4b5aa" stroke-width="1.5" transform="rotate(-0.7 128.6 408.4)"/>
<rect x="444.0" y="345.0" width="10.7" height="10.8" fill="#d9d0c9" stroke="#c4b5aa" stroke-width="1.5" transform="rotate(-7.9 449.3 350.4)"/>
<rect x="522.7" y="298.8" width="9.6" height="11.0" fill="#d9d0c9" stroke="#c4b5aa" stroke-width="1.5" transform="rotate(1.1 527.4 304.3)"/>
<path d="M378.0,402.6 h10.3 v9.3 h-5.2 v4.2 h-5.2 z" fill="#d9d0c9" stroke="#c4b5aa" stroke-width="1.5" transform="rotate(0.9 383.1 407.2)"/>
<path d="M312.3,841.1 h11.5 v13.9 h-5.8 v6.3 h-5.8 z" fill="#d9d0c9" stroke="#c4b5aa" stroke-width="1.5" transform="rotate(0.1 318.1 848.1)"/>
<path d="M521.8,601.5 h11.9 v10.7 h-6.0 v4.8 h-6.0 z" fill="#d9d0c9" stroke="#c4b5aa" stroke-width="1.5" transform="rotate(3.0 527.7 606.9)"/>
<rect x="455.5" y="659.8" width="8.2" height="17.9" fill="#d9d0c9" stroke="#c4b5aa" stroke-width="1.5" transform="rotate(0.4 459.7 668.8)"/>
<rect x="273.9" y="95.4" width="9.8" height="10.4" fill="#d9d0c9" stroke="#c4b5aa" stroke-width="1.5" transform="rotate(3.5 278.8 100.6)"/>
<path d="M191.8,567.4 h14.8 v11.8 h-7.4 v5.3 h-7.4 z" fill="#d9d0c9" stroke="#c4b5aa" stroke-width="1.5" transform="rotate(-4.8 199.2 573.3)"/>
<rect x="246.6" y="827.5" width="13.2" height="10.1" fill="#d9d0c9" stroke="#c4b5aa" stroke-width="1.5" transform="rotate(1.4 253.2 832.5)"/>
<rect x="218.6" y="163.4" width="14.1" height="11.2" fill="#d9d0c9" stroke="#c4b5aa" stroke-width="1.5" transform="rotate(1.9 225.6 169.0)"/>
<rect x="513.1" y="571.0" width="11.3" height="6.8" fill="#d9d0c9" stroke="#c4b5aa" stroke-width="1.5" transform="rotate(5.4 518.7 574.4)"/>
<rect x="439.9" y="538.9" width="7.7" height="6.4" fill="#d9d0c9" stroke="#c4b5aa" stroke-width="1.5" transform="rotate(-4.4 443.7 542.1)"/>
<path d="M616.4,62.8 h8.9 v6.8 h-4.4 v3.1 h-4.4 z" fill="#d9d0c9" stroke="#c4b5aa" stroke-width="1.5" transform="rotate(7.0 620.8 66.2)"/>
<rect x="568.0" y="625.0" width="14.6" height="13.9" fill="#d9d0c9" stroke="#c4b5aa" stroke-width="1.5" transform="rotate(6.1 575.4 631.9)"/>
<rect x="133.8" y="515.1" width="10.7" height="8.1" fill="#d9d0c9" stroke="#c4b5aa" stroke-width="1.5" transform="rotate(-0.9 139.1 519.1)"/>
<rect x="294.2" y="352.2" width="12.7" height="12.3" fill="#d9d0c9" stroke="#c4b5aa" stroke-width="1.5" transform="rotate(-1.5 300.5 358.3)"/>
<path d="M248.1,6.7 h13.2 v8.1 h-6.6 v3.7 h-6.6 z" fill="#d9d0c9" stroke="#c4b5aa" stroke-width="1.5" transform="rotate(-2.2 254.7 10.8)"/>
<rect x="69.0" y="859.3" width="11.8" height="18.2" fill="#d9d0c9" stroke="#c4b5aa" stroke-width="1.5" transform="rotate(-4.9 74.9 868.4)"/>
<rect x="531.1" y="746.5" width="8.7" height="10.2" fill="#d9d0c9" stroke="#c4b5aa" stroke-width="1.5" transform="rotate(4.5 535.4 751.6)"/>
<rect x="254.6" y="537.7" width="12.5" height="13.5" fill="#d9d0c9" stroke="#c4b5aa" stroke-width="1.5" transform="rotate(-6.4 260.9 544.4)"/>
<path d="M570.5,736.7 h13.0 v8.2 h-6.5 v3.7 h-6.5 z" fill="#d9d0c9" stroke="#c4b5aa" stroke-width="1.5" transform="rotate(4.7 577.1 740.8)"/>
<rect x="156.1" y="362.9" width="8.1" height="9.4" fill="#d9d0c9" stroke="#c4b5aa" stroke-width="1.5" transform="rotate(-0.2 160.2 367.6)"/>
<rect x="518.0" y="199.1" width="11.1" height="10.8" fill="#d9d0c9" stroke="#c4b5aa" stroke-width="1.5" transform="rotate(-7.8 523.5 204.5)"/>
<rect x="601.9" y="320.0" width="10.3" height="6.8" fill="#d9d0c9" stroke="#c4b5aa" stroke-width="1.5" transform="rotate(-4.1 607.1 323.4)"/>
<path d="M157.3,322.3 h11.7 v8.7 h-5.8 v3.9 h-5.8 z" fill="#d9d0c9" stroke="#c4b5aa" stroke-width="1.5" transform="rotate(6.8 163.1 326.6)"/>
<rect x="139.0" y="654.9" width="11.9" height="13.2" fill="#d9d0c9" stroke="#c4b5aa" stroke-width="1.5" transform="rotate(-2.7 145.0 661.5)"/>
<rect x="68.8" y="830.5" width="11.7" height="9.4" fill="#d9d0c9" stroke="#c4b5aa" stroke-width="1.5" transform="rotate(-5.0 74.6 835.2)"/>
<rect x="378.1" y="573.0" width="9.0" height="12.8" fill="#d9d0c9" stroke="#c4b5aa" stroke-width="1.5" transform="rotate(3.4 382.6 579.4)"/>
<path d="M0.1,534.6 h9.8 v10.7 h-4.9 v4.8 h-4.9 z" fill="#d9d0c9" stroke="#c4b5aa" stroke-width="1.5" transform="rotate(-3.9 5.0 540.0)"/>
<path d="M555.2,582.3 h11.2 v11.7 h-5.6 v5.3 h-5.6 z" fill="#d9d0c9" stroke="#c4b5aa" stroke-width="1.5" transform="rotate(0.1 560.8 588.2)"/>
<rect x="601.5" y="169.6" width="6.5" height="11.4" fill="#d9d0c9" stroke="#c4b5aa" stroke-width="1.5" transform="rotate(-3.8 604.7 175.3)"/>
<rect x="423.4" y="64.6" width="13.2" height="11.7" fill="#d9d0c9" stroke="#c4b5aa" stroke-width="1.5" transform="rotate(-5.5 430.0 70.5)"/>
<path d="M85.0,357.4 h10.9 v8.5 h-5.5 v3.8 h-5.5 z" fill="#d9d0c9" stroke="#c4b5aa" stroke-width="1.5" transform="rotate(6.5 90.5 361.6)"/>
<rect x="117.7" y="817.5" width="11.9" height="8.3" fill="#d9d0c9" stroke="#c4b5aa" stroke-width="1.5" transform="rotate(4.1 123.7 821.6)"/>
<path d="M19.3,637.4 h9.5 v9.7 h-4.8 v4.4 h-4.8 z" fill="#d9d0c9" stroke="#c4b5aa" stroke-width="1.5" transform="rotate(-2.8 24.1 642.3)"/>
<rect x="583.7" y="544.5" width="6.6" height="8.7" fill="#d9d0c9" stroke="#c4b5aa" stroke-width="1.5" transform="rotate(1.9 587.0 548.9)"/>
<rect x="481.7" y="384.9" width="6.5" height="15.1" fill="#d9d0c9" stroke="#c4b5aa" stroke-width="1.5" transform="rotate(-4.8 485.0 392.4)"/>
<path d="M151.8,855.1 h8.8 v9.6 h-4.4 v4.3 h-4.4 z" fill="#d9d0c9" stroke="#c4b5aa" stroke-width="1.5" transform="rotate(7.0 156.2 859.9)"/>
<rect x="565.2" y="416.0" width="11.7" height="9.6" fill="#d9d0c9" stroke="#c4b5aa" stroke-width="1.5" transform="rotate(3.4 571.0 420.8)"/>
<rect x="465.5" y="300.6" width="7.1" height="8.5" fill="#d9d0c9" stroke="#c4b5aa" stroke-width="1.5" transform="rotate(-5.8 469.0 304.9)"/>
<rect x="539.4" y="505.9" width="6.1" height="10.6" fill="#d9d0c9" stroke="#c4b5aa" stroke-width="1.5" transform="rotate(-0.0 542.4 511.2)"/>
<rect x="237.9" y="738.9" width="8.9" height="11.2" fill="#d9d0c9" stroke="#c4b5aa" stroke-width="1.5" transform="rotate(-2.3 242.4 744.6)"/>
<rect x="215.8" y="742.6" width="13.9" height="23.9" fill="#d9d0c9" stroke="#c4b5aa" stroke-width="1.5" transform="rotate(-0.6 222.8 754.5)"/>
<rect x="458.6" y="274.1" width="11.2" height="17.0" fill="#d9d0c9" stroke="#c4b5aa" stroke-width="1.5" transform="rotate(-5.5 464.2 282.6)"/>
<rect x="367.2" y="729.7" width="11.6" height="10.9" fill="#d9d0c9" stroke="#c4b5aa" stroke-width="1.5" transform="rotate(3.5 373.0 735.2)"/>
<rect x="416.0" y="183.0" width="10.5" height="10.2" fill="#d9d0c9" stroke="#c4b5aa" stroke-width="1.5" transform="rotate(-2.6 421.2 188.1)"/>
<rect x="448.4" y="377.8" width="6.6" height="9.1" fill="#d9d0c9" stroke="#c4b5aa" stroke-width="1.5" transform="rotate(-4.2 451.7 382.4)"/>
<path d="M136.9,777.1 h14.9 v10.6 h-7.5 v4.8 h-7.5 z" fill="#d9d0c9" stroke="#c4b5aa" stroke-width="1.5" transform="rotate(-5.8 144.4 782.4)"/>
<rect x="568.9" y="485.2" width="10.6" height="11.2" fill="#d9d0c9" stroke="#c4b5aa" stroke-width="1.5" transform="rotate(2.1 574.1 490.8)"/>
<path d="M109.7,530.6 h14.3 v9.2 h-7.2 v4.1 h-7.2 z" fill="#d9d0c9" stroke="#c4b5aa" stroke-width="1.5" transform="rotate(4.9 116.8 535.2)"/>
<rect x="468.3" y="626.6" width="13.0" height="9.6" fill="#d9d0c9" stroke="#c4b5aa" stroke-width="1.5" transform="rotate(3.2 474.7 631.5)"/>
<path d="M32.8,830.8 h11.1 v15.3 h-5.5 v6.9 h-5.5 z" fill="#d9d0c9" stroke="#c4b5aa" stroke-width="1.5" transform="rotate(-3.5 38.4 838.5)"/>
<path d="M16.7,284.4 h11.4 v11.0 h-5.7 v4.9 h-5.7 z" fill="#d9d0c9" stroke="#c4b5aa" stroke-width="1.5" transform="rotate(-5.2 22.4 289.9)"/>
<rect x="569.0" y="833.3" width="11.9" height="24.4" fill="#d9d0c9" stroke="#c4b5aa" stroke-width="1.5" transform="rotate(3.8 574.9 845.5)"/>
<path d="M282.2,775.6 h12.2 v10.0 h-6.1 v4.5 h-6.1 z" fill="#d9d0c9" stroke="#c4b5aa" stroke-width="1.5" transform="rotate(4.1 288.3 780.6)"/>
<path d="M564.9,697.1 h13.5 v12.9 h-6.8 v5.8 h-6.8 z" fill="#d9d0c9" stroke="#c4b5aa" stroke-width="1.5" transform="rotate(1.3 571.6 703.6)"/>
<path d="M198.9,666.6 h9.8 v11.7 h-4.9 v5.2 h-4.9 z" fill="#d9d0c9" stroke="#c4b5aa" stroke-width="1.5" transform="rotate(0.0 203.8 672.5)"/>
<rect x="505.3" y="667.5" width="11.2" height="13.2" fill="#d9d0c9" stroke="#c4b5aa" stroke-width="1.5" transform="rotate(5.2 510.9 674.1)"/>
<rect x="156.4" y="803.1" width="9.5" height="13.4" fill="#d9d0c9" stroke="#c4b5aa" stroke-width="1.5" transform="rotate(5.0 161.1 809.8)"/>
<rect x="482.0" y="555.1" width="9.2" height="11.1" fill="#d9d0c9" stroke="#c4b5aa" stroke-width="1.5" transform="rotate(2.1 486.6 560.7)"/>
<rect x="77.5" y="250.1" width="12.4" height="11.4" fill="#d9d0c9" stroke="#c4b5aa" stroke-width="1.5" transform="rotate(-2.9 83.7 255.8)"/>
<rect x="225.2" y="532.2" width="10.1" height="13.8" fill="#d9d0c9" stroke="#c4b5aa" stroke-width="1.5" transform="rotate(-4.0 230.3 539.1)"/>
<rect x="466.4" y="238.0" width="6.9" height="8.2" fill="#d9d0c9" stroke="#c4b5aa" stroke-width="1.5" transform="rotate(-4.9 469.8 242.0)"/>
<path d="M139.2,350.6 h9.4 v8.5 h-4.7 v3.8 h-4.7 z" fill="#d9d0c9" stroke="#c4b5aa" stroke-width="1.5" transform="rotate(-3.6 143.9 354.8)"/>
<rect x="430.3" y="379.0" width="6.9" height="6.4" fill="#d9d0c9" stroke="#c4b5aa" stroke-width="1.5" transform="rotate(1.2 433.7 382.2)"/>
<rect x="364.4" y="636.2" width="10.4" height="12.2" fill="#d9d0c9" stroke="#c4b5aa" stroke-width="1.5" transform="rotate(-6.1 369.6 642.3)"/>
<rect x="453.8" y="761.0" width="12.5" height="8.9" fill="#d9d0c9" stroke="#c4b5aa" stroke-width="1.5" transform="rotate(-6.5 460.0 765.4)"/>
<path d="M224.7,664.1 h13.1 v9.2 h-6.6 v4.2 h-6.6 z" fill="#d9d0c9" stroke="#c4b5aa" stroke-width="1.5" transform="rotate(6.4 231.2 668.8)"/>
<rect x="98.6" y="247.2" width="14.5" height="13.1" fill="#d9d0c9" stroke="#c4b5aa" stroke-width="1.5" transform="rotate(6.8 105.9 253.8)"/>
<rect x="556.7" y="376.0" width="7.2" height="10.6" fill="#d9d0c9" stroke="#c4b5aa" stroke-width="1.5" transform="rotate(3.6 560.3 381.3)"/>
<rect x="152.2" y="516.8" width="10.6" height="8.2" fill="#d9d0c9" stroke="#c4b5aa" stroke-width="1.5" transform="rotate(-3.0 157.6 520.9)"/>
<rect x="538.2" y="184.4" width="11.3" height="8.1" fill="#d9d0c9" stroke="#c4b5aa" stroke-width="1.5" transform="rotate(3.7 543.9 188.4)"/>
<path d="M83.8,425.4 h12.3 v8.8 h-6.2 v4.0 h-6.2 z" fill="#d9d0c9" stroke="#c4b5aa" stroke-width="1.5" transform="rotate(4.1 89.9 429.8)"/>
<rect x="528.6" y="155.9" width="11.0" height="16.4" fill="#d9d0c9" stroke="#c4b5aa" stroke-width="1.5" transform="rotate(5.2 534.1 164.1)"/>
<rect x="491.5" y="596.8" width="10.9" height="8.6" fill="#d9d0c9" stroke="#c4b5aa" stroke-width="1.5" transform="rotate(-1.6 496.9 601.1)"/>
<path d="M592.4,450.7 h8.6 v8.6 h-4.3 v3.9 h-4.3 z" fill="#d9d0c9" stroke="#c4b5aa" stroke-width="1.5" transform="rotate(7.8 596.8 455.0)"/>
<rect x="519.3" y="418.9" width="7.1" height="8.4" fill="#d9d0c9" stroke="#c4b5aa" stroke-width="1.5" transform="rotate(-0.1 522.8 423.1)"/>
<rect x="419.0" y="252.5" width="13.5" height="9.8" fill="#d9d0c9" stroke="#c4b5aa" stroke-width="1.5" transform="rotate(0.8 425.7 257.4)"/>
<rect x="239.4" y="383.1" width="9.6" height="13.8" fill="#d9d0c9" stroke="#c4b5aa" stroke-width="1.5" transform="rotate(-0.3 244.2 390.0)"/>
<path d="M26.4,395.1 h14.1 v9.2 h-7.1 v4.1 h-7.1 z" fill="#d9d0c9" stroke="#c4b5aa" stroke-width="1.5" transform="rotate(1.9 33.4 399.7)"/>
<rect x="172.6" y="134.3" width="11.6" height="10.6" fill="#d9d0c9" stroke="#c4b5aa" stroke-width="1.5" transform="rotate(0.2 178.4 139.6)"/>
<rect x="623.4" y="570.0" width="10.9" height="16.8" fill="#d9d0c9" stroke="#c4b5aa" stroke-width="1.5" transform="rotate(-7.9 628.9 578.4)"/>
<path d="M600.1,344.1 h8.5 v8.2 h-4.3 v3.7 h-4.3 z" fill="#d9d0c9" stroke="#c4b5aa" stroke-width="1.5" transform="rotate(-2.8 604.4 348.2)"/>
<rect x="443.6" y="512.2" width="9.0" height="7.5" fill="#d9d0c9" stroke="#c4b5aa" stroke-width="1.5" transform="rotate(0.5 448.1 515.9)"/>
<rect x="374.5" y="811.3" width="13.7" height="11.4" fill="#d9d0c9" stroke="#c4b5aa" stroke-width="1.5" transform="rotate(6.2 381.3 817.0)"/>
<rect x="288.6" y="668.5" width="10.2" height="8.7" fill="#d9d0c9" stroke="#c4b5aa" stroke-width="1.5" transform="rotate(-4.6 293.7 672.8)"/>
<rect x="246.9" y="568.1" width="11.5" height="9.9" fill="#d9d0c9" stroke="#c4b5aa" stroke-width="1.5" transform="rotate(-4.0 252.7 573.1)"/>
<rect x="366.2" y="510.8" width="8.1" height="10.3" fill="#d9d0c9" stroke="#c4b5aa" stroke-width="1.5" transform="rotate(-4.5 370.2 515.9)"/>
<rect x="457.2" y="704.3" width="12.2" height="8.7" fill="#d9d0c9" stroke="#c4b5aa" stroke-width="1.5" transform="rotate(-3.5 463.3 708.7)"/>
<rect x="605.5" y="548.5" width="8.9" height="9.8" fill="#d9d0c9" stroke="#c4b5aa" stroke-width="1.5" transform="rotate(2.5 609.9 553.4)"/>
<rect x="61.0" y="674.5" width="13.4" height="11.8" fill="#d9d0c9" stroke="#c4b5aa" stroke-width="1.5" transform="rotate(-2.2 67.7 680.4)"/>
<rect x="339.2" y="119.1" width="14.0" height="13.3" fill="#d9d0c9" stroke="#c4b5aa" stroke-width="1.5" transform="rotate(7.1 346.3 125.8)"/>
<rect x="237.4" y="811.0" width="14.6" height="10.7" fill="#d9d0c9" stroke="#c4b5aa" stroke-width="1.5" transform="rotate(0.4 244.7 816.4)"/>
<rect x="524.6" y="785.1" width="10.6" height="8.7" fill="#d9d0c9" stroke="#c4b5aa" stroke-width="1.5" transform="rotate(-0.6 530.0 789.4)"/>
<rect x="577.0" y="580.9" width="7.8" height="9.1" fill="#d9d0c9" stroke="#c4b5aa" stroke-width="1.5" transform="rotate(-2.0 580.9 585.4)"/>
<rect x="545.3" y="363.7" width="11.9" height="6.2" fill="#d9d0c9" stroke="#c4b5aa" stroke-width="1.5" transform="rotate(-2.4 551.3 366.8)"/>
<path d="M542.9,688.7 h13.0 v9.8 h-6.5 v4.4 h-6.5 z" fill="#d9d0c9" stroke="#c4b5aa" stroke-width="1.5" transform="rotate(5.4 549.4 693.6)"/>
<rect x="186.7" y="636.3" width="10.4" height="12.6" fill="#d9d0c9" stroke="#c4b5aa" stroke-width="1.5" transform="rotate(-5.1 191.9 642.6)"/>
<rect x="168.8" y="778.0" width="14.6" height="9.7" fill="#d9d0c9" stroke="#c4b5aa" stroke-width="1.5" transform="rotate(-6.1 176.1 782.8)"/>
<rect x="125.2" y="480.3" width="14.6" height="8.7" fill="#d9d0c9" stroke="#c4b5aa" stroke-width="1.5" transform="rotate(-5.0 132.5 484.7)"/>
<path d="M608.9,833.1 h14.7 v8.5 h-7.3 v3.8 h-7.3 z" fill="#d9d0c9" stroke="#c4b5aa" stroke-width="1.5" transform="rotate(3.2 616.3 837.4)"/>
<path d="M434.6,433.8 h8.9 v6.9 h-4.5 v3.1 h-4.5 z" fill="#d9d0c9" stroke="#c4b5aa" stroke-width="1.5" transform="rotate(-2.4 439.1 437.3)"/>
<rect x="149.5" y="404.6" width="12.5" height="11.4" fill="#d9d0c9" stroke="#c4b5aa" stroke-width="1.5" transform="rotate(5.1 155.8 410.3)"/>
<rect x="447.0" y="404.1" width="6.9" height="6.4" fill="#d9d0c9" stroke="#c4b5aa" stroke-width="1.5" transform="rotate(-3.7 450.4 407.3)"/>
<path d="M474.8,355.3 h8.9 v8.4 h-4.4 v3.8 h-4.4 z" fill="#d9d0c9" stroke="#c4b5aa" stroke-width="1.5" transform="rotate(-6.9 479.2 359.5)"/>
<rect x="222.8" y="782.2" width="10.1" height="8.6" fill="#d9d0c9" stroke="#c4b5aa" stroke-width="1.5" transform="rotate(3.0 227.8 786.6)"/>
<path d="M79.3,338.9 h11.9 v11.3 h-5.9 v5.1 h-5.9 z" fill="#d9d0c9" stroke="#c4b5aa" stroke-width="1.5" transform="rotate(-2.3 85.2 344.6)"/>
<rect x="336.4" y="88.8" width="12.9" height="12.8" fill="#d9d0c9" stroke="#c4b5aa" stroke-width="1.5" transform="rotate(1.3 342.9 95.2)"/>
<path d="M349.2,391.1 h10.2 v11.6 h-5.1 v5.2 h-5.1 z" fill="#d9d0c9" stroke="#c4b5aa" stroke-width="1.5" transform="rotate(-3.9 354.2 396.9)"/>
<path d="M363.6,208.2 h13.0 v21.4 h-6.5 v9.7 h-6.5 z" fill="#d9d0c9" stroke="#c4b5aa" stroke-width="1.5" transform="rotate(2.0 370.1 219.0)"/>
<path d="M623.6,703.7 h11.2 v12.8 h-5.6 v5.7 h-5.6 z" fill="#d9d0c9" stroke="#c4b5aa" stroke-width="1.5" transform="rotate(-4.5 629.2 710.1)"/>
<rect x="80.2" y="538.4" width="13.3" height="10.8" fill="#d9d0c9" stroke="#c4b5aa" stroke-width="1.5" transform="rotate(-6.7 86.8 543.9)"/>
<rect x="380.9" y="372.5" width="9.3" height="10.8" fill="#d9d0c9" stroke="#c4b5aa" stroke-width="1.5" transform="rotate(-4.9 385.5 377.9)"/>
<rect x="269.8" y="23.8" width="11.7" height="11.8" fill="#d9d0c9" stroke="#c4b5aa" stroke-width="1.5" transform="rotate(-3.2 275.6 29.7)"/>
<rect x="164.4" y="686.3" width="8.0" height="9.5" fill="#d9d0c9" stroke="#c4b5aa" stroke-width="1.5" transform="rotate(3.5 168.4 691.0)"/>
<rect x="274.0" y="871.7" width="14.4" height="13.5" fill="#d9d0c9" stroke="#c4b5aa" stroke-width="1.5" transform="rotate(-6.0 281.2 878.4)"/>
<rect x="509.2" y="3.7" width="8.5" height="6.7" fill="#d9d0c9" stroke="#c4b5aa" stroke-width="1.5" transform="rotate(-5.7 513.5 7.1)"/>
<rect x="58.0" y="741.3" width="13.8" height="11.1" fill="#d9d0c9" stroke="#c4b5aa" stroke-width="1.5" transform="rotate(-5.3 64.9 746.8)"/>
<rect x="479.5" y="296.2" width="8.5" height="10.5" fill="#d9d0c9" stroke="#c4b5aa" stroke-width="1.5" transform="rotate(3.5 483.7 301.4)"/>
<path d="M523.3,649.7 h11.5 v8.0 h-5.7 v3.6 h-5.7 z" fill="#d9d0c9" stroke="#c4b5aa" stroke-width="1.5" transform="rotate(4.9 529.0 653.7)"/>
<rect x="285.8" y="180.7" width="13.7" height="24.0" fill="#d9d0c9" stroke="#c4b5aa" stroke-width="1.5" transform="rotate(-2.2 292.6 192.7)"/>
<rect x="520.4" y="335.7" width="11.6" height="7.6" fill="#d9d0c9" stroke="#c4b5aa" stroke-width="1.5" transform="rotate(-7.4 526.2 339.5)"/>
<rect x="305.8" y="375.7" width="12.9" height="12.3" fill="#d9d0c9" stroke="#c4b5aa" stroke-width="1.5" transform="rotate(-3.1 312.3 381.8)"/>
<rect x="464.1" y="434.0" width="10.8" height="10.9" fill="#d9d0c9" stroke="#c4b5aa" stroke-width="1.5" transform="rotate(4.8 469.4 439.5)"/>
<rect x="41.7" y="655.6" width="10.6" height="11.9" fill="#d9d0c9" stroke="#c4b5aa" stroke-width="1.5" transform="rotate(4.3 47.0 661.5)"/>
<rect x="464.9" y="796.4" width="9.0" height="11.0" fill="#d9d0c9" stroke="#c4b5aa" stroke-width="1.5" transform="rotate(7.5 469.4 801.9)"/>
<rect x="351.4" y="535.5" width="8.0" height="11.6" fill="#d9d0c9" stroke="#c4b5aa" stroke-width="1.5" transform="rotate(-0.2 355.4 541.3)"/>
<path d="M317.3,276.4 h12.2 v12.9 h-6.1 v5.8 h-6.1 z" fill="#d9d0c9" stroke="#c4b5aa" stroke-width="1.5" transform="rotate(-4.2 323.3 282.9)"/>
<rect x="15.5" y="753.5" width="12.8" height="10.0" fill="#d9d0c9" stroke="#c4b5aa" stroke-width="1.5" transform="rotate(6.6 21.8 758.6)"/>
<path d="M297.3,815.9 h13.3 v15.3 h-6.7 v6.9 h-6.7 z" fill="#d9d0c9" stroke="#c4b5aa" stroke-width="1.5" transform="rotate(-3.7 304.0 823.5)"/>
<path d="M307.5,71.5 h12.9 v9.0 h-6.5 v4.1 h-6.5 z" fill="#d9d0c9" stroke="#c4b5aa" stroke-width="1.5" transform="rotate(4.9 314.0 76.0)"/>
<rect x="563.9" y="433.5" width="8.0" height="10.0" fill="#d9d0c9" stroke="#c4b5aa" stroke-width="1.5" transform="rotate(-5.5 567.9 438.4)"/>
<path d="M80.6,272.7 h14.0 v11.4 h-7.0 v5.1 h-7.0 z" fill="#d9d0c9" stroke="#c4b5aa" stroke-width="1.5" transform="rotate(-2.5 87.5 278.4)"/>
<rect x="24.7" y="876.3" width="14.4" height="11.9" fill="#d9d0c9" stroke="#c4b5aa" stroke-width="1.5" transform="rotate(-5.5 31.8 882.2)"/>
<path d="M65.2,316.2 h8.5 v11.0 h-4.3 v5.0 h-4.3 z" fill="#d9d0c9" stroke="#c4b5aa" stroke-width="1.5" transform="rotate(-3.4 69.5 321.7)"/>
<rect x="28.2" y="571.7" width="9.0" height="9.6" fill="#d9d0c9" stroke="#c4b5aa" stroke-width="1.5" transform="rotate(-5.1 32.8 576.5)"/>
<rect x="187.6" y="381.0" width="10.2" height="11.2" fill="#d9d0c9" stroke="#c4b5aa" stroke-width="1.5" transform="rotate(-0.4 192.7 386.6)"/>
<rect x="257.3" y="623.2" width="10.0" height="10.7" fill="#d9d0c9" stroke="#c4b5aa" stroke-width="1.5" transform="rotate(7.7 262.3 628.5)"/>
<rect x="546.4" y="831.2" width="13.9" height="14.7" fill="#d9d0c9" stroke="#c4b5aa" stroke-width="1.5" transform="rotate(-5.2 553.3 838.5)"/>
<rect x="519.2" y="183.9" width="9.9" height="9.3" fill="#d9d0c9" stroke="#c4b5aa" stroke-width="1.5" transform="rotate(1.9 524.2 188.6)"/>
<path d="M177.7,164.6 h14.5 v13.0 h-7.3 v5.9 h-7.3 z" fill="#d9d0c9" stroke="#c4b5aa" stroke-width="1.5" transform="rotate(-2.7 185.0 171.1)"/>
<rect x="8.4" y="409.0" width="8.7" height="23.5" fill="#d9d0c9" stroke="#c4b5aa" stroke-width="1.5" transform="rotate(-2.2 12.7 420.7)"/>
<rect x="504.5" y="422.4" width="11.1" height="7.1" fill="#d9d0c9" stroke="#c4b5aa" stroke-width="1.5" transform="rotate(-7.1 510.1 425.9)"/>
<rect x="603.3" y="742.3" width="9.2" height="13.5" fill="#d9d0c9" stroke="#c4b5aa" stroke-width="1.5" transform="rotate(-4.5 607.9 749.1)"/>
<path d="M329.3,149.5 h10.2 v9.3 h-5.1 v4.2 h-5.1 z" fill="#d9d0c9" stroke="#c4b5aa" stroke-width="1.5" transform="rotate(6.7 334.4 154.2)"/>
<path d="M70.4,456.6 h11.5 v12.0 h-5.7 v5.4 h-5.7 z" fill="#d9d0c9" stroke="#c4b5aa" stroke-width="1.5" transform="rotate(-3.4 76.1 462.7)"/>
<path d="M389.1,64.0 h13.7 v13.3 h-6.9 v6.0 h-6.9 z" fill="#d9d0c9" stroke="#c4b5aa" stroke-width="1.5" transform="rotate(7.4 396.0 70.6)"/>
<rect x="597.1" y="272.8" width="8.5" height="7.9" fill="#d9d0c9" stroke="#c4b5aa" stroke-width="1.5" transform="rotate(-3.5 601.3 276.7)"/>
<rect x="551.5" y="606.4" width="9.3" height="13.9" fill="#d9d0c9" stroke="#c4b5aa" stroke-width="1.5" transform="rotate(3.9 556.1 613.4)"/>
<path d="M297.6,116.0 h12.6 v10.5 h-6.3 v4.7 h-6.3 z" fill="#d9d0c9" stroke="#c4b5aa" stroke-width="1.5" transform="rotate(4.8 303.9 121.2)"/>
<rect x="216.2" y="99.5" width="12.0" height="10.4" fill="#d9d0c9" stroke="#c4b5aa" stroke-width="1.5" transform="rotate(2.2 222.2 104.7)"/>
<path d="M542.1,67.9 h9.1 v19.4 h-4.5 v8.7 h-4.5 z" fill="#d9d0c9" stroke="#c4b5aa" stroke-width="1.5" transform="rotate(7.5 546.6 77.6)"/>
<rect x="595.7" y="375.6" width="9.9" height="6.0" fill="#d9d0c9" stroke="#c4b5aa" stroke-width="1.5" transform="rotate(3.9 600.7 378.6)"/>
<path d="M588.1,394.1 h11.1 v6.2 h-5.6 v2.8 h-5.6 z" fill="#d9d0c9" stroke="#c4b5aa" stroke-width="1.5" transform="rotate(2.3 593.6 397.2)"/>
<rect x="37.5" y="534.2" width="9.6" height="9.3" fill="#d9d0c9" stroke="#c4b5aa" stroke-width="1.5" transform="rotate(2.4 42.3 538.9)"/>
<rect x="120.3" y="420.0" width="15.0" height="8.8" fill="#d9d0c9" stroke="#c4b5aa" stroke-width="1.5" transform="rotate(4.5 127.8 424.4)"/>
<rect x="210.1" y="817.6" width="8.1" height="9.4" fill="#d9d0c9" stroke="#c4b5aa" stroke-width="1.5" transform="rotate(-1.4 214.2 822.3)"/>
<rect x="31.6" y="425.1" width="9.5" height="8.7" fill="#d9d0c9" stroke="#c4b5aa" stroke-width="1.5" transform="rotate(-5.1 36.4 429.5)"/>
<path d="M193.7,117.8 h11.0 v10.2 h-5.5 v4.6 h-5.5 z" fill="#d9d0c9" stroke="#c4b5aa" stroke-width="1.5" transform="rotate(1.2 199.2 122.9)"/>
<path d="M611.0,370.1 h9.9 v6.8 h-4.9 v3.1 h-4.9 z" fill="#d9d0c9" stroke="#c4b5aa" stroke-width="1.5" transform="rotate(-1.7 615.9 373.5)"/>
<path d="M567.7,156.1 h10.6 v8.3 h-5.3 v3.7 h-5.3 z" fill="#d9d0c9" stroke="#c4b5aa" stroke-width="1.5" transform="rotate(-3.4 573.0 160.3)"/>
<path d="M556.5,339.6 h11.9 v8.3 h-6.0 v3.8 h-6.0 z" fill="#d9d0c9" stroke="#c4b5aa" stroke-width="1.5" transform="rotate(7.8 562.5 343.8)"/>
<path d="M338.6,286.1 h9.8 v12.4 h-4.9 v5.6 h-4.9 z" fill="#d9d0c9" stroke="#c4b5aa" stroke-width="1.5" transform="rotate(-0.6 343.5 292.3)"/>
<rect x="468.4" y="330.5" width="6.2" height="11.1" fill="#d9d0c9" stroke="#c4b5aa" stroke-width="1.5" transform="rotate(-7.6 471.5 336.0)"/>
<rect x="144.1" y="266.7" width="10.3" height="13.4" fill="#d9d0c9" stroke="#c4b5aa" stroke-width="1.5" transform="rotate(7.8 149.3 273.4)"/>
<path d="M545.4,282.8 h9.2 v9.5 h-4.6 v4.3 h-4.6 z" fill="#d9d0c9" stroke="#c4b5aa" stroke-width="1.5" transform="rotate(3.6 550.0 287.5)"/>
<path d="M511.2,620.6 h13.7 v9.5 h-6.9 v4.3 h-6.9 z" fill="#d9d0c9" stroke="#c4b5aa" stroke-width="1.5" transform="rotate(4.4 518.0 625.4)"/>
<rect x="580.9" y="272.0" width="8.1" height="11.8" fill="#d9d0c9" stroke="#c4b5aa" stroke-width="1.5" transform="rotate(7.5 584.9 277.9)"/>
<path d="M614.7,491.1 h11.7 v11.6 h-5.8 v5.2 h-5.8 z" fill="#d9d0c9" stroke="#c4b5aa" stroke-width="1.5" transform="rotate(-3.5 620.5 496.9)"/>
<path d="M529.9,365.5 h12.0 v10.4 h-6.0 v4.7 h-6.0 z" fill="#d9d0c9" stroke="#c4b5aa" stroke-width="1.5" transform="rotate(-6.2 535.9 370.7)"/>
<rect x="335.0" y="867.3" width="14.5" height="21.0" fill="#d9d0c9" stroke="#c4b5aa" stroke-width="1.5" transform="rotate(3.0 342.3 877.8)"/>
<rect x="429.1" y="145.4" width="14.4" height="14.0" fill="#d9d0c9" stroke="#c4b5aa" stroke-width="1.5" transform="rotate(1.6 436.3 152.4)"/>
<rect x="525.3" y="84.4" width="9.6" height="7.9" fill="#d9d0c9" stroke="#c4b5aa" stroke-width="1.5" transform="rotate(-4.2 530.1 88.3)"/>
<path d="M254.4,335.8 h10.8 v12.3 h-5.4 v5.5 h-5.4 z" fill="#d9d0c9" stroke="#c4b5aa" stroke-width="1.5" transform="rotate(1.6 259.8 341.9)"/>
<path d="M546.8,57.7 h11.4 v6.6 h-5.7 v3.0 h-5.7 z" fill="#d9d0c9" stroke="#c4b5aa" stroke-width="1.5" transform="rotate(-4.1 552.6 60.9)"/>
<rect x="354.2" y="300.2" width="11.9" height="13.6" fill="#d9d0c9" stroke="#c4b5aa" stroke-width="1.5" transform="rotate(-7.7 360.1 307.0)"/>
<path d="M379.4,789.7 h10.9 v15.6 h-5.4 v7.0 h-5.4 z" fill="#d9d0c9" stroke="#c4b5aa" stroke-width="1.5" transform="rotate(6.8 384.9 797.6)"/>
<rect x="319.9" y="400.5" width="14.4" height="18.5" fill="#d9d0c9" stroke="#c4b5aa" stroke-width="1.5" transform="rotate(6.8 327.1 409.7)"/>
<path d="M588.0,813.9 h9.1 v8.2 h-4.6 v3.7 h-4.6 z" fill="#d9d0c9" stroke="#c4b5aa" stroke-width="1.5" transform="rotate(2.6 592.6 817.9)"/>
<path d="M548.5,261.3 h8.7 v11.9 h-4.3 v5.3 h-4.3 z" fill="#d9d0c9" stroke="#c4b5aa" stroke-width="1.5" transform="rotate(0.0 552.8 267.2)"/>
<rect x="337.3" y="570.6" width="10.3" height="11.8" fill="#d9d0c9" stroke="#c4b5aa" stroke-width="1.5" transform="rotate(2.9 342.4 576.5)"/>
<path d="M92.4,319.9 h10.3 v8.1 h-5.1 v3.6 h-5.1 z" fill="#d9d0c9" stroke="#c4b5aa" stroke-width="1.5" transform="rotate(0.6 97.5 324.0)"/>
<rect x="571.7" y="203.1" width="6.3" height="6.8" fill="#d9d0c9" stroke="#c4b5aa" stroke-width="1.5" transform="rotate(0.1 574.9 206.5)"/>
<rect x="260.8" y="122.7" width="13.4" height="9.1" fill="#d9d0c9" stroke="#c4b5aa" stroke-width="1.5" transform="rotate(6.0 267.5 127.3)"/>
<rect x="231.7" y="495.2" width="10.6" height="9.6" fill="#d9d0c9" stroke="#c4b5aa" stroke-width="1.5" transform="rotate(2.9 237.0 500.0)"/>
<rect x="483.0" y="205.4" width="6.2" height="10.3" fill="#d9d0c9" stroke="#c4b5aa" stroke-width="1.5" transform="rotate(-3.7 486.1 210.6)"/>
<rect x="619.3" y="295.6" width="6.0" height="8.3" fill="#d9d0c9" stroke="#c4b5aa" stroke-width="1.5" transform="rotate(0.6 622.3 299.8)"/>
<rect x="54.1" y="252.0" width="10.8" height="19.6" fill="#d9d0c9" stroke="#c4b5aa" stroke-width="1.5" transform="rotate(-7.6 59.5 261.8)"/>
<rect x="541.0" y="587.0" width="7.8" height="8.8" fill="#d9d0c9" stroke="#c4b5aa" stroke-width="1.5" transform="rotate(-2.3 544.9 591.4)"/>
<rect x="121.0" y="94.0" width="14.4" height="14.0" fill="#d9d0c9" stroke="#c4b5aa" stroke-width="1.5" transform="rotate(4.5 128.2 100.9)"/>
<rect x="589.5" y="657.9" width="10.7" height="17.4" fill="#d9d0c9" stroke="#c4b5aa" stroke-width="1.5" transform="rotate(-4.3 594.9 666.6)"/>
<rect x="589.8" y="242.9" width="7.7" height="8.7" fill="#d9d0c9" stroke="#c4b5aa" stroke-width="1.5" transform="rotate(1.4 593.7 247.2)"/>
<path d="M571.4,758.4 h8.2 v9.0 h-4.1 v4.0 h-4.1 z" fill="#d9d0c9" stroke="#c4b5aa" stroke-width="1.5" transform="rotate(7.0 575.5 762.9)"/>
<rect x="266.9" y="600.9" width="10.6" height="9.5" fill="#d9d0c9" stroke="#c4b5aa" stroke-width="1.5" transform="rotate(2.2 272.2 605.6)"/>
<rect x="312.4" y="874.3" width="14.8" height="10.2" fill="#d9d0c9" stroke="#c4b5aa" stroke-width="1.5" transform="rotate(-6.0 319.8 879.4)"/>
<rect x="504.4" y="124.8" width="7.6" height="10.3" fill="#d9d0c9" stroke="#c4b5aa" stroke-width="1.5" transform="rotate(-1.5 508.2 129.9)"/>
<rect x="276.6" y="746.3" width="10.0" height="10.3" fill="#d9d0c9" stroke="#c4b5aa" stroke-width="1.5" transform="rotate(7.8 281.6 751.5)"/>
<rect x="364.2" y="121.3" width="13.5" height="10.7" fill="#d9d0c9" stroke="#c4b5aa" stroke-width="1.5" transform="rotate(-5.1 371.0 126.6)"/>
<path d="M517.7,236.6 h11.4 v11.0 h-5.7 v5.0 h-5.7 z" fill="#d9d0c9" stroke="#c4b5aa" stroke-width="1.5" transform="rotate(6.0 523.4 242.1)"/>
<rect x="187.4" y="425.7" width="11.2" height="13.0" fill="#d9d0c9" stroke="#c4b5aa" stroke-width="1.5" transform="rotate(4.9 192.9 432.3)"/>
<rect x="281.7" y="0.6" width="9.0" height="13.4" fill="#d9d0c9" stroke="#c4b5aa" stroke-width="1.5" transform="rotate(-7.5 286.2 7.3)"/>
<rect x="495.2" y="582.7" width="7.8" height="7.0" fill="#d9d0c9" stroke="#c4b5aa" stroke-width="1.5" transform="rotate(7.9 499.1 586.2)"/>
<rect x="606.4" y="241.0" width="7.1" height="7.6" fill="#d9d0c9" stroke="#c4b5aa" stroke-width="1.5" transform="rotate(0.2 609.9 244.8)"/>
<rect x="616.7" y="323.3" width="10.1" height="9.3" fill="#d9d0c9" stroke="#c4b5aa" stroke-width="1.5" transform="rotate(-0.1 621.7 328.0)"/>
<rect x="445.9" y="483.2" width="7.4" height="7.7" fill="#d9d0c9" stroke="#c4b5aa" stroke-width="1.5" transform="rotate(1.5 449.6 487.1)"/>
<rect x="334.4" y="433.5" width="10.1" height="10.5" fill="#d9d0c9" stroke="#c4b5aa" stroke-width="1.5" transform="rotate(7.7 339.5 438.7)"/>
<rect x="95.4" y="180.3" width="12.5" height="8.8" fill="#d9d0c9" stroke="#c4b5aa" stroke-width="1.5" transform="rotate(3.7 101.6 184.7)"/>
<path d="M610.3,646.7 h10.5 v8.7 h-5.3 v3.9 h-5.3 z" fill="#d9d0c9" stroke="#c4b5aa" stroke-width="1.5" transform="rotate(6.8 615.5 651.0)"/>
<rect x="470.6" y="65.1" width="6.5" height="11.2" fill="#d9d0c9" stroke="#c4b5aa" stroke-width="1.5" transform="rotate(5.4 473.9 70.7)"/>
<rect x="450.3" y="414.7" width="7.3" height="11.3" fill="#d9d0c9" stroke="#c4b5aa" stroke-width="1.5" transform="rotate(6.8 454.0 420.3)"/>
<rect x="504.7" y="543.4" width="11.6" height="8.6" fill="#d9d0c9" stroke="#c4b5aa" stroke-width="1.5" transform="rotate(-2.6 510.5 547.7)"/>
<rect x="409.6" y="15.1" width="12.3" height="10.0" fill="#d9d0c9" stroke="#c4b5aa" stroke-width="1.5" transform="rotate(2.2 415.8 20.1)"/>
<path d="M395.0,188.1 h13.0 v15.2 h-6.5 v6.8 h-6.5 z" fill="#d9d0c9" stroke="#c4b5aa" stroke-width="1.5" transform="rotate(7.9 401.5 195.7)"/>
<rect x="499.9" y="516.0" width="11.2" height="18.8" fill="#d9d0c9" stroke="#c4b5aa" stroke-width="1.5" transform="rotate(-2.9 505.6 525.4)"/>
<path d="M46.4,579.2 h8.8 v8.8 h-4.4 v4.0 h-4.4 z" fill="#d9d0c9" stroke="#c4b5aa" stroke-width="1.5" transform="rotate(5.4 50.8 583.7)"/>
<rect x="123.1" y="870.3" width="9.9" height="10.7" fill="#d9d0c9" stroke="#c4b5aa" stroke-width="1.5" transform="rotate(-1.9 128.0 875.7)"/>
<path d="M240.6,721.6 h8.4 v11.3 h-4.2 v5.1 h-4.2 z" fill="#d9d0c9" stroke="#c4b5aa" stroke-width="1.5" transform="rotate(-6.5 244.8 727.2)"/>
<rect x="610.2" y="409.7" width="8.5" height="10.9" fill="#d9d0c9" stroke="#c4b5aa" stroke-width="1.5" transform="rotate(2.5 614.4 415.2)"/>
<rect x="190.7" y="609.2" width="8.9" height="10.2" fill="#d9d0c9" stroke="#c4b5aa" stroke-width="1.5" transform="rotate(-2.0 195.1 614.4)"/>
<rect x="622.3" y="737.3" width="9.3" height="11.4" fill="#d9d0c9" stroke="#c4b5aa" stroke-width="1.5" transform="rotate(2.3 627.0 743.0)"/>
<rect x="456.2" y="528.9" width="6.4" height="6.3" fill="#d9d0c9" stroke="#c4b5aa" stroke-width="1.5" transform="rotate(-3.4 459.4 532.0)"/>
<rect x="434.3" y="294.1" width="7.9" height="7.0" fill="#d9d0c9" stroke="#c4b5aa" stroke-width="1.5" transform="rotate(5.6 438.3 297.6)"/>
<path d="M618.2,794.9 h8.5 v12.8 h-4.2 v5.8 h-4.2 z" fill="#d9d0c9" stroke="#c4b5aa" stroke-width="1.5" transform="rotate(-1.0 622.4 801.3)"/>
<rect x="447.8" y="721.9" width="10.4" height="12.8" fill="#d9d0c9" stroke="#c4b5aa" stroke-width="1.5" transform="rotate(6.9 453.0 728.3)"/>
<rect x="591.7" y="201.1" width="6.5" height="11.1" fill="#d9d0c9" stroke="#c4b5aa" stroke-width="1.5" transform="rotate(-3.4 595.0 206.7)"/>
<path d="M21.0,670.6 h9.5 v13.0 h-4.8 v5.8 h-4.8 z" fill="#d9d0c9" stroke="#c4b5aa" stroke-width="1.5" transform="rotate(-1.4 25.7 677.1)"/>
<rect x="156.0" y="199.6" width="10.5" height="9.9" fill="#d9d0c9" stroke="#c4b5aa" stroke-width="1.5" transform="rotate(-5.7 161.3 204.5)"/>
<path d="M110.8,609.7 h8.5 v12.1 h-4.3 v5.4 h-4.3 z" fill="#d9d0c9" stroke="#c4b5aa" stroke-width="1.5" transform="rotate(-4.8 115.0 615.8)"/>
<rect x="593.0" y="255.7" width="9.2" height="8.9" fill="#d9d0c9" stroke="#c4b5aa" stroke-width="1.5" transform="rotate(-0.5 597.7 260.1)"/>
<rect x="612.5" y="152.5" width="9.0" height="8.4" fill="#d9d0c9" stroke="#c4b5aa" stroke-width="1.5" transform="rotate(-0.8 617.0 156.7)"/>
<rect x="253.8" y="511.5" width="10.9" height="19.9" fill="#d9d0c9" stroke="#c4b5aa" stroke-width="1.5" transform="rotate(-3.5 259.2 521.5)"/>
<rect x="606.2" y="395.8" width="6.1" height="8.8" fill="#d9d0c9" stroke="#c4b5aa" stroke-width="1.5" transform="rotate(-5.7 609.3 400.2)"/>
<rect x="271.5" y="810.3" width="9.7" height="8.0" fill="#d9d0c9" stroke="#c4b5aa" stroke-width="1.5" transform="rotate(2.0 276.3 814.4)"/>
<path d="M5.8,451.4 h8.2 v11.3 h-4.1 v5.1 h-4.1 z" fill="#d9d0c9" stroke="#c4b5aa" stroke-width="1.5" transform="rotate(-2.1 9.9 457.0)"/>
<rect x="512.6" y="503.5" width="6.9" height="7.4" fill="#d9d0c9" stroke="#c4b5aa" stroke-width="1.5" transform="rotate(-4.7 516.0 507.2)"/>
<rect x="261.6" y="77.7" width="10.2" height="10.1" fill="#d9d0c9" stroke="#c4b5aa" stroke-width="1.5" transform="rotate(7.4 266.7 82.8)"/>
<rect x="180.2" y="25.2" width="11.5" height="13.1" fill="#d9d0c9" stroke="#c4b5aa" stroke-width="1.5" transform="rotate(-1.4 185.9 31.7)"/>
<rect x="14.9" y="338.5" width="14.5" height="10.5" fill="#d9d0c9" stroke="#c4b5aa" stroke-width="1.5" transform="rotate(-2.7 22.1 343.8)"/>
<rect x="310.2" y="305.8" width="13.8" height="11.3" fill="#d9d0c9" stroke="#c4b5aa" stroke-width="1.5" transform="rotate(-7.3 317.1 311.4)"/>
<rect x="309.2" y="675.5" width="8.6" height="9.8" fill="#d9d0c9" stroke="#c4b5aa" stroke-width="1.5" transform="rotate(7.2 313.5 680.4)"/>
<rect x="485.9" y="258.0" width="9.5" height="11.2" fill="#d9d0c9" stroke="#c4b5aa" stroke-width="1.5" transform="rotate(-0.1 490.6 263.5)"/>
<rect x="511.8" y="820.5" width="9.7" height="9.1" fill="#d9d0c9" stroke="#c4b5aa" stroke-width="1.5" transform="rotate(-6.4 516.7 825.1)"/>
<rect x="359.1" y="491.4" width="14.0" height="8.2" fill="#d9d0c9" stroke="#c4b5aa" stroke-width="1.5" transform="rotate(-1.5 366.1 495.6)"/>
<path d="M2.5,847.9 h13.1 v13.6 h-6.6 v6.1 h-6.6 z" fill="#d9d0c9" stroke="#c4b5aa" stroke-width="1.5" transform="rotate(-5.0 9.1 854.7)"/>
<path d="M142.2,446.7 h12.0 v8.2 h-6.0 v3.7 h-6.0 z" fill="#d9d0c9" stroke="#c4b5aa" stroke-width="1.5" transform="rotate(6.6 148.2 450.9)"/>
<rect x="469.7" y="381.8" width="6.9" height="7.0" fill="#d9d0c9" stroke="#c4b5aa" stroke-width="1.5" transform="rotate(6.7 473.1 385.3)"/>
<path d="M124.3,321.6 h14.3 v11.7 h-7.1 v5.3 h-7.1 z" fill="#d9d0c9" stroke="#c4b5aa" stroke-width="1.5" transform="rotate(0.5 131.5 327.4)"/>
<rect x="512.2" y="384.6" width="9.3" height="10.6" fill="#d9d0c9" stroke="#c4b5aa" stroke-width="1.5" transform="rotate(-0.6 516.9 389.8)"/>
<rect x="534.7" y="290.5" width="7.4" height="8.2" fill="#d9d0c9" stroke="#c4b5aa" stroke-width="1.5" transform="rotate(-7.8 538.5 294.6)"/>
<rect x="576.4" y="363.8" width="8.8" height="7.5" fill="#d9d0c9" stroke="#c4b5aa" stroke-width="1.5" transform="rotate(1.7 580.8 367.5)"/>
<rect x="195.6" y="188.0" width="12.4" height="11.4" fill="#d9d0c9" stroke="#c4b5aa" stroke-width="1.5" transform="rotate(-0.5 201.8 193.7)"/>
<rect x="380.4" y="512.2" width="11.2" height="10.8" fill="#d9d0c9" stroke="#c4b5aa" stroke-width="1.5" transform="rotate(4.5 386.0 517.5)"/>
<rect x="591.3" y="295.1" width="9.5" height="8.5" fill="#d9d0c9" stroke="#c4b5aa" stroke-width="1.5" transform="rotate(5.7 596.0 299.3)"/>
<path d="M1.1,869.0 h14.6 v20.8 h-7.3 v9.3 h-7.3 z" fill="#d9d0c9" stroke="#c4b5aa" stroke-width="1.5" transform="rotate(-1.5 8.4 879.4)"/>
<path d="M279.3,533.1 h8.4 v10.6 h-4.2 v4.8 h-4.2 z" fill="#d9d0c9" stroke="#c4b5aa" stroke-width="1.5" transform="rotate(-0.8 283.5 538.4)"/>
<path d="M59.2,646.1 h13.6 v12.8 h-6.8 v5.7 h-6.8 z" fill="#d9d0c9" stroke="#c4b5aa" stroke-width="1.5" transform="rotate(0.8 66.0 652.5)"/>
<rect x="465.8" y="826.8" width="9.1" height="10.5" fill="#d9d0c9" stroke="#c4b5aa" stroke-width="1.5" transform="rotate(-6.9 470.3 832.0)"/>
<rect x="461.4" y="201.8" width="7.8" height="11.1" fill="#d9d0c9" stroke="#c4b5aa" stroke-width="1.5" transform="rotate(1.0 465.3 207.3)"/>
<rect x="444.3" y="55.0" width="8.8" height="7.7" fill="#d9d0c9" stroke="#c4b5aa" stroke-width="1.5" transform="rotate(-5.0 448.7 58.8)"/>
<path d="M455.2,518.6 h10.4 v6.6 h-5.2 v3.0 h-5.2 z" fill="#d9d0c9" stroke="#c4b5aa" stroke-width="1.5" transform="rotate(-7.7 460.4 521.9)"/>
<path d="M596.4,40.7 h11.4 v10.3 h-5.7 v4.6 h-5.7 z" fill="#d9d0c9" stroke="#c4b5aa" stroke-width="1.5" transform="rotate(-1.6 602.1 45.9)"/>
<rect x="449.0" y="842.6" width="9.2" height="10.6" fill="#d9d0c9" stroke="#c4b5aa" stroke-width="1.5" transform="rotate(-1.6 453.6 847.9)"/>
<path d="M556.7,75.4 h8.7 v11.1 h-4.4 v5.0 h-4.4 z" fill="#d9d0c9" stroke="#c4b5aa" stroke-width="1.5" transform="rotate(7.1 561.1 81.0)"/>
<rect x="209.1" y="637.4" width="8.5" height="12.4" fill="#d9d0c9" stroke="#c4b5aa" stroke-width="1.5" transform="rotate(-4.6 213.4 643.6)"/>
<path d="M603.5,563.2 h8.5 v7.0 h-4.2 v3.2 h-4.2 z" fill="#d9d0c9" stroke="#c4b5aa" stroke-width="1.5" transform="rotate(-3.2 607.7 566.7)"/>
<path d="M546.2,311.0 h11.0 v8.6 h-5.5 v3.9 h-5.5 z" fill="#d9d0c9" stroke="#c4b5aa" stroke-width="1.5" transform="rotate(3.0 551.7 315.3)"/>
<path d="M545.4,757.4 h11.1 v12.8 h-5.5 v5.7 h-5.5 z" fill="#d9d0c9" stroke="#c4b5aa" stroke-width="1.5" transform="rotate(-1.4 550.9 763.8)"/>
<rect x="505.3" y="642.2" width="8.2" height="9.8" fill="#d9d0c9" stroke="#c4b5aa" stroke-width="1.5" transform="rotate(5.3 509.5 647.1)"/>
<rect x="155.0" y="463.4" width="8.7" height="9.9" fill="#d9d0c9" stroke="#c4b5aa" stroke-width="1.5" transform="rotate(-6.0 159.4 468.4)"/>
<path d="M552.7,563.2 h9.0 v11.5 h-4.5 v5.2 h-4.5 z" fill="#d9d0c9" stroke="#c4b5aa" stroke-width="1.5" transform="rotate(-4.5 557.3 568.9)"/>
<path d="M306.0,620.3 h11.0 v11.2 h-5.5 v5.0 h-5.5 z" fill="#d9d0c9" stroke="#c4b5aa" stroke-width="1.5" transform="rotate(-2.0 311.5 625.9)"/>
<path d="M323.6,716.7 h10.8 v12.6 h-5.4 v5.7 h-5.4 z" fill="#d9d0c9" stroke="#c4b5aa" stroke-width="1.5" transform="rotate(-0.3 329.0 723.0)"/>
<rect x="586.2" y="756.8" width="11.2" height="13.7" fill="#d9d0c9" stroke="#c4b5aa" stroke-width="1.5" transform="rotate(-3.5 591.9 763.7)"/>
<path d="M408.7,268.9 h10.0 v12.3 h-5.0 v5.5 h-5.0 z" fill="#d9d0c9" stroke="#c4b5aa" stroke-width="1.5" transform="rotate(-0.9 413.7 275.1)"/>
<rect x="567.4" y="133.3" width="10.0" height="7.4" fill="#d9d0c9" stroke="#c4b5aa" stroke-width="1.5" transform="rotate(1.8 572.4 137.0)"/>
<rect x="246.0" y="851.2" width="10.4" height="12.6" fill="#d9d0c9" stroke="#c4b5aa" stroke-width="1.5" transform="rotate(2.1 251.2 857.5)"/>
<rect x="503.8" y="486.6" width="9.6" height="10.3" fill="#d9d0c9" stroke="#c4b5aa" stroke-width="1.5" transform="rotate(0.5 508.5 491.7)"/>
<rect x="120.9" y="161.9" width="11.1" height="13.0" fill="#d9d0c9" stroke="#c4b5aa" stroke-width="1.5" transform="rotate(6.3 126.4 168.4)"/>
<rect x="490.0" y="279.1" width="11.9" height="6.9" fill="#d9d0c9" stroke="#c4b5aa" stroke-width="1.5" transform="rotate(3.4 495.9 282.5)"/>
<path d="M624.4,523.5 h11.0 v9.9 h-5.5 v4.5 h-5.5 z" fill="#d9d0c9" stroke="#c4b5aa" stroke-width="1.5" transform="rotate(-1.0 629.9 528.5)"/>
<rect x="551.6" y="551.8" width="8.3" height="6.2" fill="#d9d0c9" stroke="#c4b5aa" stroke-width="1.5" transform="rotate(-1.8 555.8 554.9)"/>
<path d="M482.1,238.6 h8.6 v9.6 h-4.3 v4.3 h-4.3 z" fill="#d9d0c9" stroke="#c4b5aa" stroke-width="1.5" transform="rotate(-2.1 486.4 243.4)"/>
<rect x="617.3" y="212.0" width="6.0" height="9.1" fill="#d9d0c9" stroke="#c4b5aa" stroke-width="1.5" transform="rotate(-0.9 620.3 216.5)"/>
<rect x="324.0" y="788.3" width="13.2" height="12.0" fill="#d9d0c9" stroke="#c4b5aa" stroke-width="1.5" transform="rotate(7.2 330.6 794.3)"/>
<path d="M178.1,503.6 h9.2 v10.9 h-4.6 v4.9 h-4.6 z" fill="#d9d0c9" stroke="#c4b5aa" stroke-width="1.5" transform="rotate(-5.1 182.6 509.1)"/>
<path d="M295.6,537.5 h11.5 v9.5 h-5.8 v4.3 h-5.8 z" fill="#d9d0c9" stroke="#c4b5aa" stroke-width="1.5" transform="rotate(2.6 301.4 542.3)"/>
<rect x="115.6" y="456.3" width="9.5" height="8.7" fill="#d9d0c9" stroke="#c4b5aa" stroke-width="1.5" transform="rotate(-2.7 120.3 460.7)"/>
<rect x="142.9" y="874.0" width="8.1" height="12.9" fill="#d9d0c9" stroke="#c4b5aa" stroke-width="1.5" transform="rotate(7.7 147.0 880.5)"/>
<rect x="102.7" y="337.0" width="14.7" height="18.0" fill="#d9d0c9" stroke="#c4b5aa" stroke-width="1.5" transform="rotate(4.2 110.0 346.0)"/>
<rect x="451.0" y="823.6" width="9.1" height="12.4" fill="#d9d0c9" stroke="#c4b5aa" stroke-width="1.5" transform="rotate(-4.5 455.6 829.8)"/>
<rect x="477.2" y="590.2" width="6.6" height="10.9" fill="#d9d0c9" stroke="#c4b5aa" stroke-width="1.5" transform="rotate(-3.6 480.5 595.6)"/>
<rect x="470.2" y="415.9" width="7.7" height="8.1" fill="#d9d0c9" stroke="#c4b5aa" stroke-width="1.5" transform="rotate(-4.8 474.1 420.0)"/>
<rect x="558.4" y="817.1" width="11.8" height="8.2" fill="#d9d0c9" stroke="#c4b5aa" stroke-width="1.5" transform="rotate(-1.9 564.3 821.2)"/>
<rect x="581.9" y="432.7" width="6.1" height="11.8" fill="#d9d0c9" stroke="#c4b5aa" stroke-width="1.5" transform="rotate(7.2 585.0 438.6)"/>
<path d="M208.6,719.3 h14.0 v10.2 h-7.0 v4.6 h-7.0 z" fill="#d9d0c9" stroke="#c4b5aa" stroke-width="1.5" transform="rotate(3.2 215.6 724.4)"/>
<rect x="332.8" y="2.4" width="14.9" height="18.8" fill="#d9d0c9" stroke="#c4b5aa" stroke-width="1.5" transform="rotate(6.8 340.3 11.8)"/>
<rect x="240.4" y="870.1" width="8.4" height="10.4" fill="#d9d0c9" stroke="#c4b5aa" stroke-width="1.5" transform="rotate(-7.6 244.7 875.2)"/>
<rect x="144.8" y="155.2" width="12.1" height="17.0" fill="#d9d0c9" stroke="#c4b5aa" stroke-width="1.5" transform="rotate(7.8 150.8 163.7)"/>
<rect x="290.8" y="301.1" width="12.5" height="13.6" fill="#d9d0c9" stroke="#c4b5aa" stroke-width="1.5" transform="rotate(1.1 297.0 307.9)"/>
<rect x="309.0" y="135.9" width="10.1" height="9.1" fill="#d9d0c9" stroke="#c4b5aa" stroke-width="1.5" transform="rotate(7.6 314.0 140.4)"/>
<rect x="471.1" y="467.3" width="7.2" height="7.8" fill="#d9d0c9" stroke="#c4b5aa" stroke-width="1.5" transform="rotate(0.3 474.7 471.3)"/>
<rect x="469.4" y="2.3" width="7.2" height="8.9" fill="#d9d0c9" stroke="#c4b5aa" stroke-width="1.5" transform="rotate(-4.9 473.0 6.7)"/>
<rect x="474.2" y="277.5" width="7.9" height="9.3" fill="#d9d0c9" stroke="#c4b5aa" stroke-width="1.5" transform="rotate(6.6 478.1 282.2)"/>
<rect x="460.6" y="255.4" width="11.7" height="6.4" fill="#d9d0c9" stroke="#c4b5aa" stroke-width="1.5" transform="rotate(4.5 466.5 258.6)"/>
<rect x="598.2" y="599.1" width="7.7" height="15.5" fill="#d9d0c9" stroke="#c4b5aa" stroke-width="1.5" transform="rotate(2.5 602.1 606.8)"/>
<rect x="461.5" y="452.2" width="6.3" height="14.9" fill="#d9d0c9" stroke="#c4b5aa" stroke-width="1.5" transform="rotate(4.9 464.6 459.7)"/>
<rect x="434.0" y="304.8" width="7.6" height="10.5" fill="#d9d0c9" stroke="#c4b5aa" stroke-width="1.5" transform="rotate(2.6 437.8 310.1)"/>
<path d="M19.9,310.2 h10.9 v20.4 h-5.5 v9.2 h-5.5 z" fill="#d9d0c9" stroke="#c4b5aa" stroke-width="1.5" transform="rotate(5.2 25.3 320.4)"/>
<rect x="576.1" y="89.5" width="8.1" height="9.1" fill="#d9d0c9" stroke="#c4b5aa" stroke-width="1.5" transform="rotate(-2.3 580.1 94.0)"/>
<rect x="560.2" y="294.0" width="8.1" height="7.7" fill="#d9d0c9" stroke="#c4b5aa" stroke-width="1.5" transform="rotate(-0.5 564.2 297.8)"/>
<rect x="209.1" y="293.7" width="14.4" height="9.5" fill="#d9d0c9" stroke="#c4b5aa" stroke-width="1.5" transform="rotate(-3.7 216.3 298.4)"/>
<path d="M201.7,152.5 h10.1 v10.3 h-5.0 v4.6 h-5.0 z" fill="#d9d0c9" stroke="#c4b5aa" stroke-width="1.5" transform="rotate(4.2 206.7 157.7)"/>
<rect x="316.7" y="361.2" width="14.2" height="8.5" fill="#d9d0c9" stroke="#c4b5aa" stroke-width="1.5" transform="rotate(-3.5 323.8 365.5)"/>
<rect x="252.6" y="296.0" width="11.3" height="8.1" fill="#d9d0c9" stroke="#c4b5aa" stroke-width="1.5" transform="rotate(-0.9 258.3 300.0)"/>
<rect x="584.3" y="143.0" width="8.4" height="12.0" fill="#d9d0c9" stroke="#c4b5aa" stroke-width="1.5" transform="rotate(4.6 588.5 149.0)"/>
<path d="M107.8,365.8 h14.2 v11.9 h-7.1 v5.4 h-7.1 z" fill="#d9d0c9" stroke="#c4b5aa" stroke-width="1.5" transform="rotate(-5.7 114.9 371.8)"/>
<rect x="141.0" y="752.5" width="14.4" height="9.1" fill="#d9d0c9" stroke="#c4b5aa" stroke-width="1.5" transform="rotate(-2.9 148.1 757.1)"/>
<rect x="522.5" y="669.6" width="9.7" height="10.9" fill="#d9d0c9" stroke="#c4b5aa" stroke-width="1.5" transform="rotate(-6.5 527.3 675.0)"/>
<path d="M439.6,175.6 h10.6 v6.8 h-5.3 v3.0 h-5.3 z" fill="#d9d0c9" stroke="#c4b5aa" stroke-width="1.5" transform="rotate(-6.5 444.9 179.0)"/>
<rect x="100.7" y="552.9" width="8.4" height="9.9" fill="#d9d0c9" stroke="#c4b5aa" stroke-width="1.5" transform="rotate(-2.5 104.8 557.9)"/>
<path d="M173.2,817.8 h12.5 v12.0 h-6.2 v5.4 h-6.2 z" fill="#d9d0c9" stroke="#c4b5aa" stroke-width="1.5" transform="rotate(-3.4 179.4 823.8)"/>
<rect x="353.8" y="554.1" width="15.0" height="11.9" fill="#d9d0c9" stroke="#c4b5aa" stroke-width="1.5" transform="rotate(-5.3 361.3 560.0)"/>
<path d="M42.1,628.3 h12.5 v12.3 h-6.3 v5.6 h-6.3 z" fill="#d9d0c9" stroke="#c4b5aa" stroke-width="1.5" transform="rotate(-7.6 48.4 634.5)"/>
<rect x="448.7" y="448.3" width="8.5" height="6.5" fill="#d9d0c9" stroke="#c4b5aa" stroke-width="1.5" transform="rotate(7.0 452.9 451.5)"/>
<rect x="237.7" y="312.0" width="14.4" height="12.3" fill="#d9d0c9" stroke="#c4b5aa" stroke-width="1.5" transform="rotate(-1.2 244.9 318.2)"/>
<path d="M229.1,568.1 h11.1 v8.0 h-5.6 v3.6 h-5.6 z" fill="#d9d0c9" stroke="#c4b5aa" stroke-width="1.5" transform="rotate(6.3 234.6 572.1)"/>
<rect x="442.4" y="5.1" width="6.2" height="9.0" fill="#d9d0c9" stroke="#c4b5aa" stroke-width="1.5" transform="rotate(5.2 445.5 9.6)"/>
<rect x="96.0" y="117.6" width="12.3" height="9.6" fill="#d9d0c9" stroke="#c4b5aa" stroke-width="1.5" transform="rotate(6.6 102.2 122.4)"/>
<rect x="161.5" y="735.8" width="8.7" height="13.2" fill="#d9d0c9" stroke="#c4b5aa" stroke-width="1.5" transform="rotate(7.2 165.9 742.4)"/>
<path d="M67.3,382.0 h9.1 v20.6 h-4.6 v9.3 h-4.6 z" fill="#d9d0c9" stroke="#c4b5aa" stroke-width="1.5" transform="rotate(-2.0 71.9 392.3)"/>
<rect x="9.5" y="255.7" width="14.0" height="10.8" fill="#d9d0c9" stroke="#c4b5aa" stroke-width="1.5" transform="rotate(-4.5 16.5 261.1)"/>
<rect x="367.9" y="530.5" width="12.0" height="12.2" fill="#d9d0c9" stroke="#c4b5aa" stroke-width="1.5" transform="rotate(4.7 373.9 536.6)"/>
<path d="M217.8,253.1 h9.9 v12.7 h-5.0 v5.7 h-5.0 z" fill="#d9d0c9" stroke="#c4b5aa" stroke-width="1.5" transform="rotate(-5.5 222.8 259.4)"/>
<rect x="100.6" y="452.4" width="8.6" height="8.7" fill="#d9d0c9" stroke="#c4b5aa" stroke-width="1.5" transform="rotate(-0.4 104.8 456.7)"/>
<rect x="334.9" y="749.8" width="9.4" height="18.0" fill="#d9d0c9" stroke="#c4b5aa" stroke-width="1.5" transform="rotate(4.9 339.6 758.8)"/>
<rect x="223.4" y="605.0" width="8.5" height="8.6" fill="#d9d0c9" stroke="#c4b5aa" stroke-width="1.5" transform="rotate(-5.9 227.6 609.3)"/>
<rect x="329.2" y="495.7" width="8.7" height="21.6" fill="#d9d0c9" stroke="#c4b5aa" stroke-width="1.5" transform="rotate(7.6 333.6 506.5)"/>
<path d="M346.1,608.6 h11.8 v9.6 h-5.9 v4.3 h-5.9 z" fill="#d9d0c9" stroke="#c4b5aa" stroke-width="1.5" transform="rotate(3.1 352.0 613.4)"/>
<path d="M152.1,426.9 h12.1 v12.1 h-6.1 v5.4 h-6.1 z" fill="#d9d0c9" stroke="#c4b5aa" stroke-width="1.5" transform="rotate(-0.2 158.2 432.9)"/>
<rect x="140.6" y="191.8" width="9.7" height="20.4" fill="#d9d0c9" stroke="#c4b5aa" stroke-width="1.5" transform="rotate(0.8 145.4 202.0)"/>
<rect x="102.0" y="432.8" width="8.5" height="8.7" fill="#d9d0c9" stroke="#c4b5aa" stroke-width="1.5" transform="rotate(5.1 106.2 437.2)"/>
<rect x="266.1" y="389.0" width="8.0" height="8.0" fill="#d9d0c9" stroke="#c4b5aa" stroke-width="1.5" transform="rotate(-3.3 270.1 393.0)"/>
<rect x="305.9" y="97.3" width="9.8" height="12.3" fill="#d9d0c9" stroke="#c4b5aa" stroke-width="1.5" transform="rotate(3.3 310.8 103.4)"/>
<path d="M7.1,695.2 h9.9 v24.5 h-4.9 v11.0 h-4.9 z" fill="#d9d0c9" stroke="#c4b5aa" stroke-width="1.5" transform="rotate(2.7 12.0 707.5)"/>
<rect x="462.6" y="312.6" width="9.1" height="9.9" fill="#d9d0c9" stroke="#c4b5aa" stroke-width="1.5" transform="rotate(4.0 467.2 317.5)"/>
<rect x="500.2" y="468.7" width="7.2" height="6.4" fill="#d9d0c9" stroke="#c4b5aa" stroke-width="1.5" transform="rotate(4.4 503.8 471.9)"/>
<path d="M76.1,480.2 h10.4 v8.7 h-5.2 v3.9 h-5.2 z" fill="#d9d0c9" stroke="#c4b5aa" stroke-width="1.5" transform="rotate(-0.1 81.3 484.6)"/>
<path d="M20.8,855.9 h9.0 v11.9 h-4.5 v5.4 h-4.5 z" fill="#d9d0c9" stroke="#c4b5aa" stroke-width="1.5" transform="rotate(4.7 25.3 861.9)"/>
<rect x="596.1" y="544.1" width="6.3" height="8.6" fill="#d9d0c9" stroke="#c4b5aa" stroke-width="1.5" transform="rotate(-5.5 599.2 548.4)"/>
<path d="M152.1,111.1 h9.9 v8.3 h-4.9 v3.7 h-4.9 z" fill="#d9d0c9" stroke="#c4b5aa" stroke-width="1.5" transform="rotate(-0.6 157.1 115.2)"/>
<rect x="532.7" y="403.9" width="8.0" height="6.2" fill="#d9d0c9" stroke="#c4b5aa" stroke-width="1.5" transform="rotate(-2.1 536.7 407.0)"/>
<rect x="442.8" y="464.0" width="7.2" height="6.4" fill="#d9d0c9" stroke="#c4b5aa" stroke-width="1.5" transform="rotate(-2.6 446.4 467.2)"/>
<rect x="503.1" y="799.7" width="12.0" height="9.4" fill="#d9d0c9" stroke="#c4b5aa" stroke-width="1.5" transform="rotate(-5.9 509.1 804.4)"/>
<path d="M588.5,61.9 h8.4 v8.8 h-4.2 v4.0 h-4.2 z" fill="#d9d0c9" stroke="#c4b5aa" stroke-width="1.5" transform="rotate(-7.8 592.7 66.3)"/>
<rect x="118.1" y="752.3" width="12.8" height="10.0" fill="#d9d0c9" stroke="#c4b5aa" stroke-width="1.5" transform="rotate(-7.0 124.6 757.3)"/>
<rect x="614.8" y="164.3" width="9.0" height="11.8" fill="#d9d0c9" stroke="#c4b5aa" stroke-width="1.5" transform="rotate(3.7 619.3 170.3)"/>
<rect x="36.5" y="694.2" width="10.2" height="21.9" fill="#d9d0c9" stroke="#c4b5aa" stroke-width="1.5" transform="rotate(-3.6 41.6 705.1)"/>
<rect x="287.2" y="850.3" width="12.5" height="11.8" fill="#d9d0c9" stroke="#c4b5aa" stroke-width="1.5" transform="rotate(7.6 293.4 856.2)"/>
<path d="M371.5,73.3 h12.3 v8.5 h-6.2 v3.8 h-6.2 z" fill="#d9d0c9" stroke="#c4b5aa" stroke-width="1.5" transform="rotate(1.6 377.7 77.5)"/>
<path d="M289.6,684.9 h10.8 v10.8 h-5.4 v4.9 h-5.4 z" fill="#d9d0c9" stroke="#c4b5aa" stroke-width="1.5" transform="rotate(-2.6 295.0 690.3)"/>
<rect x="102.5" y="738.7" width="8.2" height="11.1" fill="#d9d0c9" stroke="#c4b5aa" stroke-width="1.5" transform="rotate(-6.4 106.6 744.2)"/>
<rect x="287.0" y="597.1" width="13.0" height="13.5" fill="#d9d0c9" stroke="#c4b5aa" stroke-width="1.5" transform="rotate(-5.9 293.5 603.9)"/>
<path d="M569.0,775.7 h8.4 v12.7 h-4.2 v5.7 h-4.2 z" fill="#d9d0c9" stroke="#c4b5aa" stroke-width="1.5" transform="rotate(2.8 573.3 782.1)"/>
<path d="M620.8,454.1 h9.3 v6.5 h-4.6 v2.9 h-4.6 z" fill="#d9d0c9" stroke="#c4b5aa" stroke-width="1.5" transform="rotate(1.0 625.5 457.4)"/>
<rect x="532.5" y="390.0" width="7.1" height="9.7" fill="#d9d0c9" stroke="#c4b5aa" stroke-width="1.5" transform="rotate(-4.4 536.0 394.9)"/>
<rect x="202.1" y="4.5" width="8.6" height="11.9" fill="#d9d0c9" stroke="#c4b5aa" stroke-width="1.5" transform="rotate(2.5 206.3 10.5)"/>
<rect x="225.8" y="457.3" width="13.3" height="17.9" fill="#d9d0c9" stroke="#c4b5aa" stroke-width="1.5" transform="rotate(6.3 232.5 466.3)"/>
<rect x="54.1" y="761.5" width="11.5" height="10.7" fill="#d9d0c9" stroke="#c4b5aa" stroke-width="1.5" transform="rotate(2.8 59.8 766.8)"/>
<rect x="195.9" y="93.6" width="8.3" height="10.9" fill="#d9d0c9" stroke="#c4b5aa" stroke-width="1.5" transform="rotate(5.8 200.0 99.1)"/>
<rect x="509.1" y="83.2" width="8.3" height="10.3" fill="#d9d0c9" stroke="#c4b5aa" stroke-width="1.5" transform="rotate(1.9 513.3 88.3)"/>
<path d="M12.0,92.0 L19.0,107.0 L44.0,300.0 L71.0,585.0 L90.0,718.0 L108.0,880.0" fill="none" stroke="#cfcccc" stroke-width="10" stroke-linecap="round" stroke-linejoin="round"/>
<path d="M12.0,92.0 L19.0,107.0 L44.0,300.0 L71.0,585.0 L90.0,718.0 L108.0,880.0" fill="none" stroke="#ffffff" stroke-width="8" stroke-linecap="round" stroke-linejoin="round"/>
<path d="M233.0,0.0 L243.0,57.0 L254.0,145.0 L272.0,300.0 L296.0,476.0" fill="none" stroke="#cfcccc" stroke-width="10" stroke-linecap="round" stroke-linejoin="round"/>
<path d="M233.0,0.0 L243.0,57.0 L254.0,145.0 L272.0,300.0 L296.0,476.0" fill="none" stroke="#ffffff" stroke-width="8" stroke-linecap="round" stroke-linejoin="round"/>
<path d="M163.0,0.0 L170.0,57.0" fill="none" stroke="#cfcccc" stroke-width="9" stroke-linecap="round" stroke-linejoin="round"/>
<path d="M163.0,0.0 L170.0,57.0" fill="none" stroke="#ffffff" stroke-width="7" stroke-linecap="round" stroke-linejoin="round"/>
<path d="M484.0,0.0 L493.0,108.0 L502.0,218.0 L515.0,300.0 L502.0,384.0 L490.0,445.0 L472.0,561.0 L455.0,640.0" fill="none" stroke="#cfcccc" stroke-width="9" stroke-linecap="round" stroke-linejoin="round"/>
<path d="M484.0,0.0 L493.0,108.0 L502.0,218.0 L515.0,300.0 L502.0,384.0 L490.0,445.0 L472.0,561.0 L455.0,640.0" fill="none" stroke="#ffffff" stroke-width="7" stroke-linecap="round" stroke-linejoin="round"/>
<path d="M0.0,306.0 L38.0,301.0 L191.0,287.0 L312.0,265.0 L380.0,250.0 L503.0,222.0 L625.0,233.0" fill="none" stroke="#cfcccc" stroke-width="10" stroke-linecap="round" stroke-linejoin="round"/>
<path d="M0.0,306.0 L38.0,301.0 L191.0,287.0 L312.0,265.0 L380.0,250.0 L503.0,222.0 L625.0,233.0" fill="none" stroke="#ffffff" stroke-width="8" stroke-linecap="round" stroke-linejoin="round"/>
<path d="M172.0,417.0 L312.0,398.0" fill="none" stroke="#cfcccc" stroke-width="9" stroke-linecap="round" stroke-linejoin="round"/>
<path d="M172.0,417.0 L312.0,398.0" fill="none" stroke="#ffffff" stroke-width="7" stroke-linecap="round" stroke-linejoin="round"/>
<path d="M174.0,417.0 L180.0,495.0" fill="none" stroke="#cfcccc" stroke-width="9" stroke-linecap="round" stroke-linejoin="round"/>
<path d="M174.0,417.0 L180.0,495.0" fill="none" stroke="#ffffff" stroke-width="7" stroke-linecap="round" stroke-linejoin="round"/>
<path d="M0.0,516.0 L312.0,478.0 L409.0,474.0" fill="none" stroke="#cfcccc" stroke-width="10" stroke-linecap="round" stroke-linejoin="round"/>
<path d="M0.0,516.0 L312.0,478.0 L409.0,474.0" fill="none" stroke="#ffffff" stroke-width="8" stroke-linecap="round" stroke-linejoin="round"/>
<path d="M409.0,474.0 L417.0,585.0 L419.0,880.0" fill="none" stroke="#cfcccc" stroke-width="10" stroke-linecap="round" stroke-linejoin="round"/>
<path d="M409.0,474.0 L417.0,585.0 L419.0,880.0" fill="none" stroke="#ffffff" stroke-width="8" stroke-linecap="round" stroke-linejoin="round"/>
<path d="M77.0,589.0 L285.0,590.0" fill="none" stroke="#cfcccc" stroke-width="9" stroke-linecap="round" stroke-linejoin="round"/>
<path d="M77.0,589.0 L285.0,590.0" fill="none" stroke="#ffffff" stroke-width="7" stroke-linecap="round" stroke-linejoin="round"/>
<path d="M0.0,617.0 L75.0,615.0" fill="none" stroke="#cfcccc" stroke-width="9" stroke-linecap="round" stroke-linejoin="round"/>
<path d="M0.0,617.0 L75.0,615.0" fill="none" stroke="#ffffff" stroke-width="7" stroke-linecap="round" stroke-linejoin="round"/>
<path d="M0.0,730.0 L99.0,720.0 L312.0,702.0 L417.0,687.0" fill="none" stroke="#cfcccc" stroke-width="10" stroke-linecap="round" stroke-linejoin="round"/>
<path d="M0.0,730.0 L99.0,720.0 L312.0,702.0 L417.0,687.0" fill="none" stroke="#ffffff" stroke-width="8" stroke-linecap="round" stroke-linejoin="round"/>
<path d="M440.0,691.0 L625.0,728.0" fill="none" stroke="#cfcccc" stroke-width="9" stroke-linecap="round" stroke-linejoin="round"/>
<path d="M440.0,691.0 L625.0,728.0" fill="none" stroke="#ffffff" stroke-width="7" stroke-linecap="round" stroke-linejoin="round"/>
<path d="M489.0,444.0 L625.0,472.0" fill="none" stroke="#cfcccc" stroke-width="9" stroke-linecap="round" stroke-linejoin="round"/>
<path d="M489.0,444.0 L625.0,472.0" fill="none" stroke="#ffffff" stroke-width="7" stroke-linecap="round" stroke-linejoin="round"/>
<path d="M302.0,340.0 L367.0,329.0" fill="none" stroke="#cfcccc" stroke-width="9" stroke-linecap="round" stroke-linejoin="round"/>
<path d="M302.0,340.0 L367.0,329.0" fill="none" stroke="#ffffff" stroke-width="7" stroke-linecap="round" stroke-linejoin="round"/>
<path d="M522.0,323.0 L625.0,340.0" fill="none" stroke="#cfcccc" stroke-width="8" stroke-linecap="round" stroke-linejoin="round"/>
<path d="M522.0,323.0 L625.0,340.0" fill="none" stroke="#ffffff" stroke-width="6" stroke-linecap="round" stroke-linejoin="round"/>
<path d="M247.0,594.0 L250.0,700.0" fill="none" stroke="#cfcccc" stroke-width="9" stroke-linecap="round" stroke-linejoin="round"/>
<path d="M247.0,594.0 L250.0,700.0" fill="none" stroke="#ffffff" stroke-width="7" stroke-linecap="round" stroke-linejoin="round"/>
<path d="M129.0,631.0 L136.0,704.0" fill="none" stroke="#cfcccc" stroke-width="8" stroke-linecap="round" stroke-linejoin="round"/>
<path d="M129.0,631.0 L136.0,704.0" fill="none" stroke="#ffffff" stroke-width="6" stroke-linecap="round" stroke-linejoin="round"/>
<path d="M0.0,800.0 L63.0,800.0" fill="none" stroke="#cfcccc" stroke-width="9" stroke-linecap="round" stroke-linejoin="round"/>
<path d="M0.0,800.0 L63.0,800.0" fill="none" stroke="#ffffff" stroke-width="7" stroke-linecap="round" stroke-linejoin="round"/>
<path d="M436.0,815.0 L500.0,815.0" fill="none" stroke="#cfcccc" stroke-width="7" stroke-linecap="round" stroke-linejoin="round"/>
<path d="M436.0,815.0 L500.0,815.0" fill="none" stroke="#ffffff" stroke-width="5" stroke-linecap="round" stroke-linejoin="round"/>
<path d="M499.0,619.0 L488.0,697.0" fill="none" stroke="#cfcccc" stroke-width="6" stroke-linecap="round" stroke-linejoin="round"/>
<path d="M499.0,619.0 L488.0,697.0" fill="none" stroke="#ffffff" stroke-width="4" stroke-linecap="round" stroke-linejoin="round"/>
<path d="M84.0,50.0 L157.0,48.0" fill="none" stroke="#cfcccc" stroke-width="7" stroke-linecap="round" stroke-linejoin="round"/>
<path d="M84.0,50.0 L157.0,48.0" fill="none" stroke="#ffffff" stroke-width="5" stroke-linecap="round" stroke-linejoin="round"/>
<path d="M560.0,240.0 L575.0,300.0 L590.0,330.0" fill="none" stroke="#cfcccc" stroke-width="7" stroke-linecap="round" stroke-linejoin="round"/>
<path d="M560.0,240.0 L575.0,300.0 L590.0,330.0" fill="none" stroke="#ffffff" stroke-width="5" stroke-linecap="round" stroke-linejoin="round"/>
<path d="M170.0,168.0 L182.0,268.0" fill="none" stroke="#dcdada" stroke-width="8" stroke-linecap="round" stroke-linejoin="round"/>
<path d="M170.0,168.0 L182.0,268.0" fill="none" stroke="#f6f4f4" stroke-width="6" stroke-linecap="round" stroke-linejoin="round"/>
<path d="M170.0,168.0 L182.0,268.0" fill="none" stroke="#c9c6c6" stroke-width="1.5" stroke-dasharray="1.5,3"/>
<path d="M190.0,200.0 L205.0,215.0 L210.0,270.0" fill="none" stroke="#dcdada" stroke-width="8" stroke-linecap="round" stroke-linejoin="round"/>
<path d="M190.0,200.0 L205.0,215.0 L210.0,270.0" fill="none" stroke="#f6f4f4" stroke-width="6" stroke-linecap="round" stroke-linejoin="round"/>
<path d="M190.0,200.0 L205.0,215.0 L210.0,270.0" fill="none" stroke="#c9c6c6" stroke-width="1.5" stroke-dasharray="1.5,3"/>
<path d="M421.0,362.0 L499.0,379.0" fill="none" stroke="#dcdada" stroke-width="8" stroke-linecap="round" stroke-linejoin="round"/>
<path d="M421.0,362.0 L499.0,379.0" fill="none" stroke="#f6f4f4" stroke-width="6" stroke-linecap="round" stroke-linejoin="round"/>
<path d="M421.0,362.0 L499.0,379.0" fill="none" stroke="#c9c6c6" stroke-width="1.5" stroke-dasharray="1.5,3"/>
<path d="M302.0,781.0 L417.0,770.0" fill="none" stroke="#dcdada" stroke-width="8" stroke-linecap="round" stroke-linejoin="round"/>
<path d="M302.0,781.0 L417.0,770.0" fill="none" stroke="#f6f4f4" stroke-width="6" stroke-linecap="round" stroke-linejoin="round"/>
<path d="M302.0,781.0 L417.0,770.0" fill="none" stroke="#c9c6c6" stroke-width="1.5" stroke-dasharray="1.5,3"/>
<path d="M195.0,712.0 L206.0,880.0" fill="none" stroke="#dcdada" stroke-width="8" stroke-linecap="round" stroke-linejoin="round"/>
<path d="M195.0,712.0 L206.0,880.0" fill="none" stroke="#f6f4f4" stroke-width="6" stroke-linecap="round" stroke-linejoin="round"/>
<path d="M195.0,712.0 L206.0,880.0" fill="none" stroke="#c9c6c6" stroke-width="1.5" stroke-dasharray="1.5,3"/>
<path d="M260.0,708.0 L268.0,880.0" fill="none" stroke="#dcdada" stroke-width="8" stroke-linecap="round" stroke-linejoin="round"/>
<path d="M260.0,708.0 L268.0,880.0" fill="none" stroke="#f6f4f4" stroke-width="6" stroke-linecap="round" stroke-linejoin="round"/>
<path d="M260.0,708.0 L268.0,880.0" fill="none" stroke="#c9c6c6" stroke-width="1.5" stroke-dasharray="1.5,3"/>
<path d="M375.0,285.0 L400.0,300.0 L409.0,345.0" fill="none" stroke="#dcdada" stroke-width="8" stroke-linecap="round" stroke-linejoin="round"/>
<path d="M375.0,285.0 L400.0,300.0 L409.0,345.0" fill="none" stroke="#f6f4f4" stroke-width="6" stroke-linecap="round" stroke-linejoin="round"/>
<path d="M375.0,285.0 L400.0,300.0 L409.0,345.0" fill="none" stroke="#c9c6c6" stroke-width="1.5" stroke-dasharray="1.5,3"/>
<path d="M330.0,270.0 L370.0,265.0" fill="none" stroke="#dcdada" stroke-width="7" stroke-linecap="round" stroke-linejoin="round"/>
<path d="M330.0,270.0 L370.0,265.0" fill="none" stroke="#f6f4f4" stroke-width="5" stroke-linecap="round" stroke-linejoin="round"/>
<path d="M330.0,270.0 L370.0,265.0" fill="none" stroke="#c9c6c6" stroke-width="1.5" stroke-dasharray="1.5,3"/>
<path d="M163.0,56.0 L212.0,482.0" fill="none" stroke="#9c9c9c" stroke-width="1.2"/>
<path d="M215.0,482.0 L325.0,653.0 L447.0,837.0 L470.0,880.0" fill="none" stroke="#9c9c9c" stroke-width="1.2"/>
<path d="M0.0,561.0 L288.0,867.0" fill="none" stroke="#9c9c9c" stroke-width="1.2"/>
<path d="M132.0,509.0 L184.0,708.0" fill="none" stroke="#9c9c9c" stroke-width="1.2"/>
<rect x="158.5" y="51.5" width="9" height="9" fill="#f4f4f4" stroke="#8a8a8a" stroke-width="1.5"/>
<rect x="183.5" y="265.5" width="9" height="9" fill="#f4f4f4" stroke="#8a8a8a" stroke-width="1.5"/>
<rect x="207.5" y="477.5" width="9" height="9" fill="#f4f4f4" stroke="#8a8a8a" stroke-width="1.5"/>
<rect x="18.5" y="571.5" width="9" height="9" fill="#f4f4f4" stroke="#8a8a8a" stroke-width="1.5"/>
<rect x="320.5" y="648.5" width="9" height="9" fill="#f4f4f4" stroke="#8a8a8a" stroke-width="1.5"/>
<rect x="442.5" y="832.5" width="9" height="9" fill="#f4f4f4" stroke="#8a8a8a" stroke-width="1.5"/>
<rect x="167.5" y="722.5" width="9" height="9" fill="#f4f4f4" stroke="#8a8a8a" stroke-width="1.5"/>
<rect x="310.5" y="860.5" width="9" height="9" fill="#f4f4f4" stroke="#8a8a8a" stroke-width="1.5"/>
<path d="M-5,89.5 L87,81.6 L202,71.5 L302,57 L630,16" stroke="#bdbb7e" stroke-width="18" fill="none" stroke-linejoin="round"/>
<path d="M-5,89.5 L87,81.6 L202,71.5 L302,57 L630,16" stroke="#f7f8c4" stroke-width="15" fill="none" stroke-linejoin="round"/>
<path d="M625.0,139.0 L570.0,111.0 L515.0,105.0 L472.0,120.0 L411.0,139.0 L374.0,151.0 L349.0,169.0 L340.0,194.0 L343.0,224.0 L356.0,249.0 L380.0,298.0 L405.0,329.0 L417.0,384.0 L423.0,445.0 L426.0,506.0 L428.0,567.0 L432.0,690.0 L435.0,825.0" fill="none" stroke="#aad3df" stroke-width="10" stroke-linejoin="round"/>
<path d="M435,825 L625,837" fill="none" stroke="#aad3df" stroke-width="4"/>
<path d="M233.0,0.0 L239.0,57.0 L249.0,124.0 L296.0,155.0 L367.0,141.0 L378.0,151.0 L352.0,175.0 L344.0,200.0 L346.0,230.0 L360.0,258.0 L384.0,300.0 L408.0,335.0 L419.0,390.0 L425.0,450.0 L428.0,510.0 L430.0,570.0 L625.0,606.0" fill="none" stroke="#a893b9" stroke-width="3" stroke-dasharray="10,4" opacity="0.85"/>
<path d="M515,98 L570,104 L625,128" fill="none" stroke="#2a45d6" stroke-width="1.5" stroke-dasharray="2,5"/>
<path d="M330,480 L345,486 L333,540 L355,545 M367,480 L372,520 M320,505 L338,520" fill="none" stroke="#b58a3a" stroke-width="2" stroke-dasharray="5,3"/>
<rect x="0" y="75" width="25" height="35" fill="#f1f0d8" stroke="#b9b78a" stroke-width="1.5"/>
<text x="309" y="62" font-family="Liberation Sans" font-size="17" fill="#333" stroke="#ffffff" stroke-width="3" paint-order="stroke" stroke-opacity="0.9" transform="rotate(-7 309 62)" text-anchor="start">Kantora iela</text>
<text x="90" y="87" font-family="Liberation Sans" font-size="17" fill="#333" stroke="#ffffff" stroke-width="3" paint-order="stroke" stroke-opacity="0.9" transform="rotate(-7 90 87)" text-anchor="start">ora iela</text>
<text x="90" y="305" font-family="Liberation Sans" font-size="15" fill="#333" stroke="#ffffff" stroke-width="3" paint-order="stroke" stroke-opacity="0.9" transform="rotate(-5 90 305)" text-anchor="start">Penkules iela</text>
<text x="393" y="262" font-family="Liberation Sans" font-size="15" fill="#333" stroke="#ffffff" stroke-width="3" paint-order="stroke" stroke-opacity="0.9" transform="rotate(-12 393 262)" text-anchor="start">Penkules iela</text>
<text x="580" y="236" font-family="Liberation Sans" font-size="15" fill="#333" stroke="#ffffff" stroke-width="3" paint-order="stroke" stroke-opacity="0.9" transform="rotate(0 580 236)" text-anchor="start">Penk</text>
<text x="173" y="426" font-family="Liberation Sans" font-size="15" fill="#333" stroke="#ffffff" stroke-width="3" paint-order="stroke" stroke-opacity="0.9" transform="rotate(-5 173 426)" text-anchor="start">Grīvas iela</text>
<text x="150" y="526" font-family="Liberation Sans" font-size="15" fill="#333" stroke="#ffffff" stroke-width="3" paint-order="stroke" stroke-opacity="0.9" transform="rotate(-5 150 526)" text-anchor="start">Paleju iela</text>
<text x="323" y="479" font-family="Liberation Sans" font-size="15" fill="#333" stroke="#ffffff" stroke-width="3" paint-order="stroke" stroke-opacity="0.9" transform="rotate(-4 323 479)" text-anchor="start">Paleju iela</text>
<text x="100" y="600" font-family="Liberation Sans" font-size="15" fill="#333" stroke="#ffffff" stroke-width="3" paint-order="stroke" stroke-opacity="0.9" transform="rotate(-4 100 600)" text-anchor="start">Paleju iela</text>
<text x="15" y="735" font-family="Liberation Sans" font-size="15" fill="#333" stroke="#ffffff" stroke-width="3" paint-order="stroke" stroke-opacity="0.9" transform="rotate(-5 15 735)" text-anchor="start">Zeltiņu iela</text>
<text x="297" y="706" font-family="Liberation Sans" font-size="15" fill="#333" stroke="#ffffff" stroke-width="3" paint-order="stroke" stroke-opacity="0.9" transform="rotate(-5 297 706)" text-anchor="start">Zeltiņu iela</text>
<text x="310" y="786" font-family="Liberation Sans" font-size="15" fill="#333" stroke="#ffffff" stroke-width="3" paint-order="stroke" stroke-opacity="0.9" transform="rotate(-5 310 786)" text-anchor="start">Lūkas iela</text>
<text x="546" y="455" font-family="Liberation Sans" font-size="15" fill="#333" stroke="#ffffff" stroke-width="3" paint-order="stroke" stroke-opacity="0.9" transform="rotate(12 546 455)" text-anchor="start">Sējas iela</text>
<text x="283" y="225" font-family="Liberation Sans" font-size="18" fill="#333" stroke="#ffffff" stroke-width="3" paint-order="stroke" stroke-opacity="0.9" transform="rotate(0 283 225)" text-anchor="start">Apsītes</text>
<text x="335" y="453" font-family="Liberation Sans" font-size="18" fill="#333" stroke="#ffffff" stroke-width="3" paint-order="stroke" stroke-opacity="0.9" transform="rotate(0 335 453)" text-anchor="start">Stūrmaļi</text>
<text x="256" y="150" font-family="Liberation Sans" font-size="15" fill="#333" stroke="#ffffff" stroke-width="3" paint-order="stroke" stroke-opacity="0.9" transform="rotate(82 256 150)" text-anchor="start">Upesgrīvas iela</text>
<text x="278" y="325" font-family="Liberation Sans" font-size="15" fill="#333" stroke="#ffffff" stroke-width="3" paint-order="stroke" stroke-opacity="0.9" transform="rotate(82 278 325)" text-anchor="start">Upesgrīvas iela</text>
<text x="490" y="130" font-family="Liberation Sans" font-size="15" fill="#333" stroke="#ffffff" stroke-width="3" paint-order="stroke" stroke-opacity="0.9" transform="rotate(84 490 130)" text-anchor="start">Dauguļu iela</text>
<text x="500" y="445" font-family="Liberation Sans" font-size="15" fill="#333" stroke="#ffffff" stroke-width="3" paint-order="stroke" stroke-opacity="0.9" transform="rotate(-80 500 445)" text-anchor="start">Dauguļu iela</text>
<text x="34" y="262" font-family="Liberation Sans" font-size="15" fill="#333" stroke="#ffffff" stroke-width="3" paint-order="stroke" stroke-opacity="0.9" transform="rotate(84 34 262)" text-anchor="start">Lilijų iela</text>
<text x="105" y="774" font-family="Liberation Sans" font-size="15" fill="#333" stroke="#ffffff" stroke-width="3" paint-order="stroke" stroke-opacity="0.9" transform="rotate(82 105 774)" text-anchor="start">Lilijų iela</text>
<text x="240" y="590" font-family="Liberation Sans" font-size="15" fill="#333" stroke="#ffffff" stroke-width="3" paint-order="stroke" stroke-opacity="0.9" transform="rotate(84 240 590)" text-anchor="start">Žubītes iela</text>
<text x="193" y="735" font-family="Liberation Sans" font-size="15" fill="#333" stroke="#ffffff" stroke-width="3" paint-order="stroke" stroke-opacity="0.9" transform="rotate(84 193 735)" text-anchor="start">Stariņu iela</text>
<text x="408" y="484" font-family="Liberation Sans" font-size="15" fill="#333" stroke="#ffffff" stroke-width="3" paint-order="stroke" stroke-opacity="0.9" transform="rotate(86 408 484)" text-anchor="start">Rožlejų iela</text>
<text x="458" y="252" font-family="Liberation Sans" font-size="15" fill="#333" stroke="#ffffff" stroke-width="3" paint-order="stroke" stroke-opacity="0.9" transform="rotate(70 458 252)" text-anchor="start">Brigades iela</text>
<text x="590" y="292" font-family="Liberation Sans" font-size="15" fill="#333" stroke="#ffffff" stroke-width="3" paint-order="stroke" stroke-opacity="0.9" transform="rotate(20 590 292)" text-anchor="start">Spole</text>
<text x="430" y="750" font-family="Liberation Sans" font-size="18" fill="#4a73b5" stroke="#ffffff" stroke-width="3" paint-order="stroke" stroke-opacity="0.9" transform="rotate(-84 430 750)" text-anchor="start" font-style="italic">Mārupīte</text>
<text x="570" y="128" font-family="Liberation Sans" font-size="18" fill="#4a73b5" stroke="#ffffff" stroke-width="3" paint-order="stroke" stroke-opacity="0.9" transform="rotate(20 570 128)" text-anchor="start" font-style="italic">Mā.</text>
<text x="341" y="258" font-family="Liberation Sans" font-size="16" fill="#8e75a8" stroke="#ffffff" stroke-width="3" paint-order="stroke" stroke-opacity="0.9" transform="rotate(62 341 258)" text-anchor="start">Mārupes novads</text>
<text x="0" y="100" font-family="Liberation Sans" font-size="16" fill="#333" stroke="#ffffff" stroke-width="3" paint-order="stroke" stroke-opacity="0.9" transform="rotate(0 0 100)" text-anchor="start">V15</text>
</svg>
<div style="position:absolute;left:346px;top:848px;width:279px;height:32px;background:rgba(255,255,255,0.8);"></div>
<div style="position:absolute;left:356px;top:853px;font-size:22px;line-height:1;white-space:pre;color:#333;font-family:'Liberation Sans'"><span style="color:#0078a8">Leaflet</span> | © <span style="color:#0078a8">OpenStreetMap</span></div>
<div style="position:absolute;left:21.3px;top:20.3px;width:67.4px;height:129px;box-sizing:border-box;border:3.8px solid rgba(0,0,0,0.25);border-radius:8px;">
 <div style="position:absolute;left:0;top:0;width:59.8px;height:121.4px;background:#fff;border-radius:4px;"></div>
 <div style="position:absolute;left:0;top:60px;width:59.8px;height:2px;background:#c8c8c8;"></div>
 <div style="position:absolute;left:16.9px;top:32.1px;width:26.2px;height:4.2px;background:#000;"></div>
 <div style="position:absolute;left:27.3px;top:21.9px;width:5.6px;height:24.2px;background:#000;"></div>
 <div style="position:absolute;left:16.9px;top:93.8px;width:26.2px;height:4.2px;background:#000;"></div>
</div>
<div style="position:absolute;left:21.2px;top:170.2px;width:67.7px;height:67.5px;box-sizing:border-box;border:3.7px solid rgba(0,0,0,0.25);border-radius:8px;">
 <div style="position:absolute;left:0;top:0;width:60.3px;height:60.1px;background:#fff;border-radius:4px;"></div>
 <svg style="position:absolute;left:0;top:0" width="60" height="60" viewBox="0 0 60 60"><path d="M29.85,18.7 L44.2,32 L40.2,32 L40.2,44 L33.3,44 L33.3,34.8 L27,34.8 L27,44 L20.1,44 L20.1,32 L15.8,32 Z" fill="#000"/></svg>
</div>

<!--/MAP-->
</div>

<!-- ===== Widget: Current problems ===== -->
<div class="w" style="left:20px;top:259px;width:1861px;height:684px;"></div>
<div class="ttl" style="left:42px;top:281.0px;">Current problems</div>
<div class="t hd" style="left:207px;top:342.7px;">Time</div>
<div class="a" style="left:266px;top:351px;width:0;height:0;border-left:8px solid transparent;border-right:8px solid transparent;border-top:11.5px solid #768d99;"></div>
<div class="t hd" style="left:326px;top:342.7px;">Info</div>
<div class="t hd" style="left:386px;top:342.7px;">Host</div>
<div class="t hd" style="left:544px;top:342.7px;">Problem • Severity</div>
<div class="t hd" style="left:962px;top:342.7px;">Duration</div>
<div class="t hd" style="left:1073px;top:342.7px;">Update</div>
<div class="t hd" style="left:1171px;top:342.7px;">Actions</div>
<div class="t hd" style="left:1271px;top:342.7px;">Tags</div>
<div class="a" style="left:22px;top:385px;width:1857px;height:4px;background:#dfe4e7;"></div>
<div class="a" style="left:22px;top:449px;width:1857px;height:2px;background:#ebeef0;"></div>
<div class="t lnk" style="left:145.5px;top:407px;">05:46:08 PM</div>
<div class="a" style="left:300px;top:389px;width:4px;height:62px;background:#b0d4ec;"></div>
<div class="a" style="left:294.2px;top:409px;width:7.7px;height:7.7px;border:4px solid #fff;border-radius:50%;background:#2f6db3;"></div>
<div class="t" style="left:386.5px;top:407px;">Ubuntu22.04</div>
<div class="a" style="left:386px;top:433px;width:140px;border-top:2px dotted #1f2c33;"></div>
<div class="a" style="left:535px;top:389px;width:418px;height:60px;background:#f0a565;overflow:hidden;">
  <div class="t" style="right:13px;top:18px;color:#683410;">Linux: Zabbix agent is not available (for 3m)</div>
  <div class="a" style="left:0px;right:13px;top:44px;border-top:2px dotted #683410;"></div>
</div>
<div class="t" style="left:962px;top:406px;">6m <svg class="one" viewBox="0 0 1139 1472"><path transform="matrix(1 0 0 -1 0 1472)" d="M763,0 L583,0 L583,1147 Q518,1085 412,1023 Q306,961 222,930 L222,1104 Q373,1175 486,1276 Q599,1377 646,1472 L763,1472 Z"/></svg>s</div>
<div class="a" style="left:963px;top:432px;width:65px;border-top:2px dotted #1f2c33;"></div>
<div class="t lnk" style="left:1074px;top:406px;">Update</div>
<div class="a" style="left:1074px;top:433px;width:78px;height:2px;background:#b8cde4;"></div>
<div class="tag" style="left:1272px;width:105px;">class: os</div>
<div class="tag" style="left:1383px;width:220px;">component: system</div>
<div class="tag" style="left:1609px;width:200px;">scope: availability</div>
<div class="a" style="left:1822.8px;top:414.3px;width:7px;height:7px;border-radius:50%;background:#acbbc3;"></div>
<div class="a" style="left:1833.5px;top:414.3px;width:7px;height:7px;border-radius:50%;background:#acbbc3;"></div>
<div class="a" style="left:1844.2px;top:414.3px;width:7px;height:7px;border-radius:50%;background:#acbbc3;"></div>

<!-- ===== Widget: Host availability (table) ===== -->
<div class="w" style="left:20px;top:959px;width:1640px;height:544px;"></div>
<div class="ttl" style="left:42px;top:980.5px;">Host availability</div>
<div class="a" style="left:295px;top:1025px;width:272px;height:60px;background:#5dad6e;"></div>
<div class="a" style="left:567px;top:1025px;width:273px;height:60px;background:#c85652;"></div>
<div class="a" style="left:840px;top:1025px;width:273px;height:60px;background:#e7a73c;"></div>
<div class="a" style="left:1113px;top:1025px;width:273px;height:60px;background:#b0b9bf;"></div>
<div class="t" style="left:305px;top:1042.7px;">Available</div>
<div class="t" style="left:577px;top:1042.7px;">Not available</div>
<div class="t" style="left:848.5px;top:1042.7px;">Mixed</div>
<div class="t" style="left:1122px;top:1042.7px;">Unknown</div>
<div class="t" style="left:1396px;top:1042.7px;">Total</div>
<div class="a" style="left:22px;top:1085px;width:1636px;height:4px;background:#dfe4e7;"></div>
<div class="a" style="left:1386px;top:1025px;width:272px;height:2px;background:#ebeef0;"></div>
<div id="hatable">
<div class="t hd" style="left:42px;top:1107.0px;">Total Hosts</div>
<div class="t" style="left:307px;top:1107.0px;"><svg class="one" viewBox="0 0 1139 1472"><path transform="matrix(1 0 0 -1 0 1472)" d="M763,0 L583,0 L583,1147 Q518,1085 412,1023 Q306,961 222,930 L222,1104 Q373,1175 486,1276 Q599,1377 646,1472 L763,1472 Z"/></svg></div>
<div class="t" style="left:579px;top:1107.0px;"><svg class="one" viewBox="0 0 1139 1472"><path transform="matrix(1 0 0 -1 0 1472)" d="M763,0 L583,0 L583,1147 Q518,1085 412,1023 Q306,961 222,930 L222,1104 Q373,1175 486,1276 Q599,1377 646,1472 L763,1472 Z"/></svg></div>
<div class="t" style="left:852px;top:1107.0px;">0</div>
<div class="t" style="left:1125px;top:1107.0px;"><svg class="one" viewBox="0 0 1139 1472"><path transform="matrix(1 0 0 -1 0 1472)" d="M763,0 L583,0 L583,1147 Q518,1085 412,1023 Q306,961 222,930 L222,1104 Q373,1175 486,1276 Q599,1377 646,1472 L763,1472 Z"/></svg></div>
<div class="t" style="left:1398px;top:1107.0px;">3</div>
<div class="hline" style="left:22px;top:1149.2px;width:1636px;"></div>
<div class="t hd" style="left:42px;top:1169.0px;">Agent (active)</div>
<div class="t" style="left:307px;top:1169.0px;">0</div>
<div class="t" style="left:579px;top:1169.0px;">0</div>
<div class="t" style="left:852px;top:1169.0px;">-</div>
<div class="t" style="left:1125px;top:1169.0px;">0</div>
<div class="t" style="left:1398px;top:1169.0px;">0</div>
<div class="hline" style="left:22px;top:1211.2px;width:1636px;"></div>
<div class="t hd" style="left:42px;top:1231.1px;">Agent (passive)</div>
<div class="t" style="left:307px;top:1231.1px;"><svg class="one" viewBox="0 0 1139 1472"><path transform="matrix(1 0 0 -1 0 1472)" d="M763,0 L583,0 L583,1147 Q518,1085 412,1023 Q306,961 222,930 L222,1104 Q373,1175 486,1276 Q599,1377 646,1472 L763,1472 Z"/></svg></div>
<div class="t" style="left:579px;top:1231.1px;"><svg class="one" viewBox="0 0 1139 1472"><path transform="matrix(1 0 0 -1 0 1472)" d="M763,0 L583,0 L583,1147 Q518,1085 412,1023 Q306,961 222,930 L222,1104 Q373,1175 486,1276 Q599,1377 646,1472 L763,1472 Z"/></svg></div>
<div class="t" style="left:852px;top:1231.1px;">0</div>
<div class="t" style="left:1125px;top:1231.1px;"><svg class="one" viewBox="0 0 1139 1472"><path transform="matrix(1 0 0 -1 0 1472)" d="M763,0 L583,0 L583,1147 Q518,1085 412,1023 Q306,961 222,930 L222,1104 Q373,1175 486,1276 Q599,1377 646,1472 L763,1472 Z"/></svg></div>
<div class="t" style="left:1398px;top:1231.1px;">3</div>
<div class="hline" style="left:22px;top:1273.3px;width:1636px;"></div>
<div class="t hd" style="left:42px;top:1293.1px;">SNMP</div>
<div class="t" style="left:307px;top:1293.1px;">0</div>
<div class="t" style="left:579px;top:1293.1px;">0</div>
<div class="t" style="left:852px;top:1293.1px;">0</div>
<div class="t" style="left:1125px;top:1293.1px;">0</div>
<div class="t" style="left:1398px;top:1293.1px;">0</div>
<div class="hline" style="left:22px;top:1335.3px;width:1636px;"></div>
<div class="t hd" style="left:42px;top:1355.2px;">JMX</div>
<div class="t" style="left:307px;top:1355.2px;">0</div>
<div class="t" style="left:579px;top:1355.2px;">0</div>
<div class="t" style="left:852px;top:1355.2px;">0</div>
<div class="t" style="left:1125px;top:1355.2px;">0</div>
<div class="t" style="left:1398px;top:1355.2px;">0</div>
<div class="hline" style="left:22px;top:1397.4px;width:1636px;"></div>
<div class="t hd" style="left:42px;top:1417.2px;">IPMI</div>
<div class="t" style="left:307px;top:1417.2px;">0</div>
<div class="t" style="left:579px;top:1417.2px;">0</div>
<div class="t" style="left:852px;top:1417.2px;">0</div>
<div class="t" style="left:1125px;top:1417.2px;">0</div>
<div class="t" style="left:1398px;top:1417.2px;">0</div>
<div class="hline" style="left:22px;top:1459.5px;width:1636px;"></div>
<div class="vdot" style="left:295px;top:1088px;height:371px;"></div>
<div class="vdot" style="left:567px;top:1088px;height:371px;"></div>
<div class="vdot" style="left:840px;top:1088px;height:371px;"></div>
<div class="vdot" style="left:1113px;top:1088px;height:371px;"></div>
<div class="vdot" style="left:1386px;top:1088px;height:371px;"></div>
</div>

<!-- ===== Widget: Host navigator ===== -->
<div class="w" style="left:1676px;top:959px;width:831px;height:544px;"></div>
<div class="ttl" style="left:1698px;top:980.0px;">Host navigator</div>
<div class="tri" style="left:1702px;top:1055px;"></div>
<div class="t" style="left:1733px;top:1048.7px;">Linux servers</div>
<div class="badge" style="top:1045px;"><svg class="one" viewBox="0 0 1139 1472"><path transform="matrix(1 0 0 -1 0 1472)" d="M763,0 L583,0 L583,1147 Q518,1085 412,1023 Q306,961 222,930 L222,1104 Q373,1175 486,1276 Q599,1377 646,1472 L763,1472 Z"/></svg></div>
<div class="hline" style="left:1678px;top:1098px;width:827px;"></div>
<div class="t lnk" style="left:1763px;top:1123.2px;">Ubuntu22.04</div>
<div class="badge" style="top:1119px;"><svg class="one" viewBox="0 0 1139 1472"><path transform="matrix(1 0 0 -1 0 1472)" d="M763,0 L583,0 L583,1147 Q518,1085 412,1023 Q306,961 222,930 L222,1104 Q373,1175 486,1276 Q599,1377 646,1472 L763,1472 Z"/></svg></div>
<div class="hline" style="left:1678px;top:1172px;width:827px;"></div>
<div class="tri" style="left:1702px;top:1203px;"></div>
<div class="t" style="left:1733px;top:1196.7px;">Zabbix servers</div>
<div class="hline" style="left:1678px;top:1246px;width:827px;"></div>
<div class="a" style="left:1678px;top:1247px;width:827px;height:73px;background:#fbf6c7;"></div>
<div class="t lnk" style="left:1764px;top:1269.7px;">Zabbix server</div>
<div class="hline" style="left:1678px;top:1320px;width:827px;"></div>

<!-- footer -->
<div class="t hd" style="left:1126px;top:1634.7px;">Zabbix 7.0.0. © 200<svg class="one" viewBox="0 0 1139 1472"><path transform="matrix(1 0 0 -1 0 1472)" d="M763,0 L583,0 L583,1147 Q518,1085 412,1023 Q306,961 222,930 L222,1104 Q373,1175 486,1276 Q599,1377 646,1472 L763,1472 Z"/></svg>–2024, <span style="border-bottom:2px solid #bfcad0;padding-bottom:1px;">Zabbix SIA</span></div>

<!-- red annotation boxes -->
<div class="red" style="left:1055px;top:388.5px;width:116px;height:58px;"></div>
<div class="red" style="left:1736.5px;top:1095px;width:181px;height:70px;"></div>
<div class="red" style="left:1660.5px;top:948.5px;width:858.5px;height:560px;"></div>

<!-- context menu -->
<div class="a" style="left:400px;top:407px;width:430px;height:945px;background:#000;border-radius:13px;box-shadow:0 6px 40px rgba(31,44,51,0.14);z-index:20;">
  <div class="a" style="left:8px;top:8px;width:414px;height:929px;background:#fff;border-radius:5px;box-sizing:border-box;border:2px solid #e9edf0;"></div>
</div>
<div id="menu" style="position:absolute;left:0;top:0;z-index:21;">
<div class="mh" style="top:440.7px;">VIEW</div>
<div class="mi" style="top:487.2px;">Dashboards</div>
<div class="mi" style="top:534.7px;">Problems</div>
<div class="mi" style="top:583.0px;">Latest data</div>
<div class="mi" style="top:631.2px;">Graphs</div>
<div class="mi" style="top:678.9px;color:#768d99;">Web</div>
<div class="mi" style="top:727.2px;">Inventory</div>
<div class="msep" style="top:773px;"></div>
<div class="mh" style="top:798.9px;">CONFIGURATION</div>
<div class="mi" style="top:845.4px;">Host</div>
<div class="mi" style="top:893.5px;">Items</div>
<div class="mi" style="top:941.5px;">Triggers</div>
<div class="mi" style="top:989.5px;">Graphs</div>
<div class="mi" style="top:1037.5px;">Discovery</div>
<div class="mi" style="top:1085.0px;">Web</div>
<div class="msep" style="top:1131px;"></div>
<div class="mh" style="top:1156.7px;">SCRIPTS</div>
<div class="mi" style="top:1202.8px;">Detect operating system</div>
<div class="mi" style="top:1251.5px;">Ping</div>
<div class="mi" style="top:1298.5px;">Traceroute</div>
</div>

</body></html>
